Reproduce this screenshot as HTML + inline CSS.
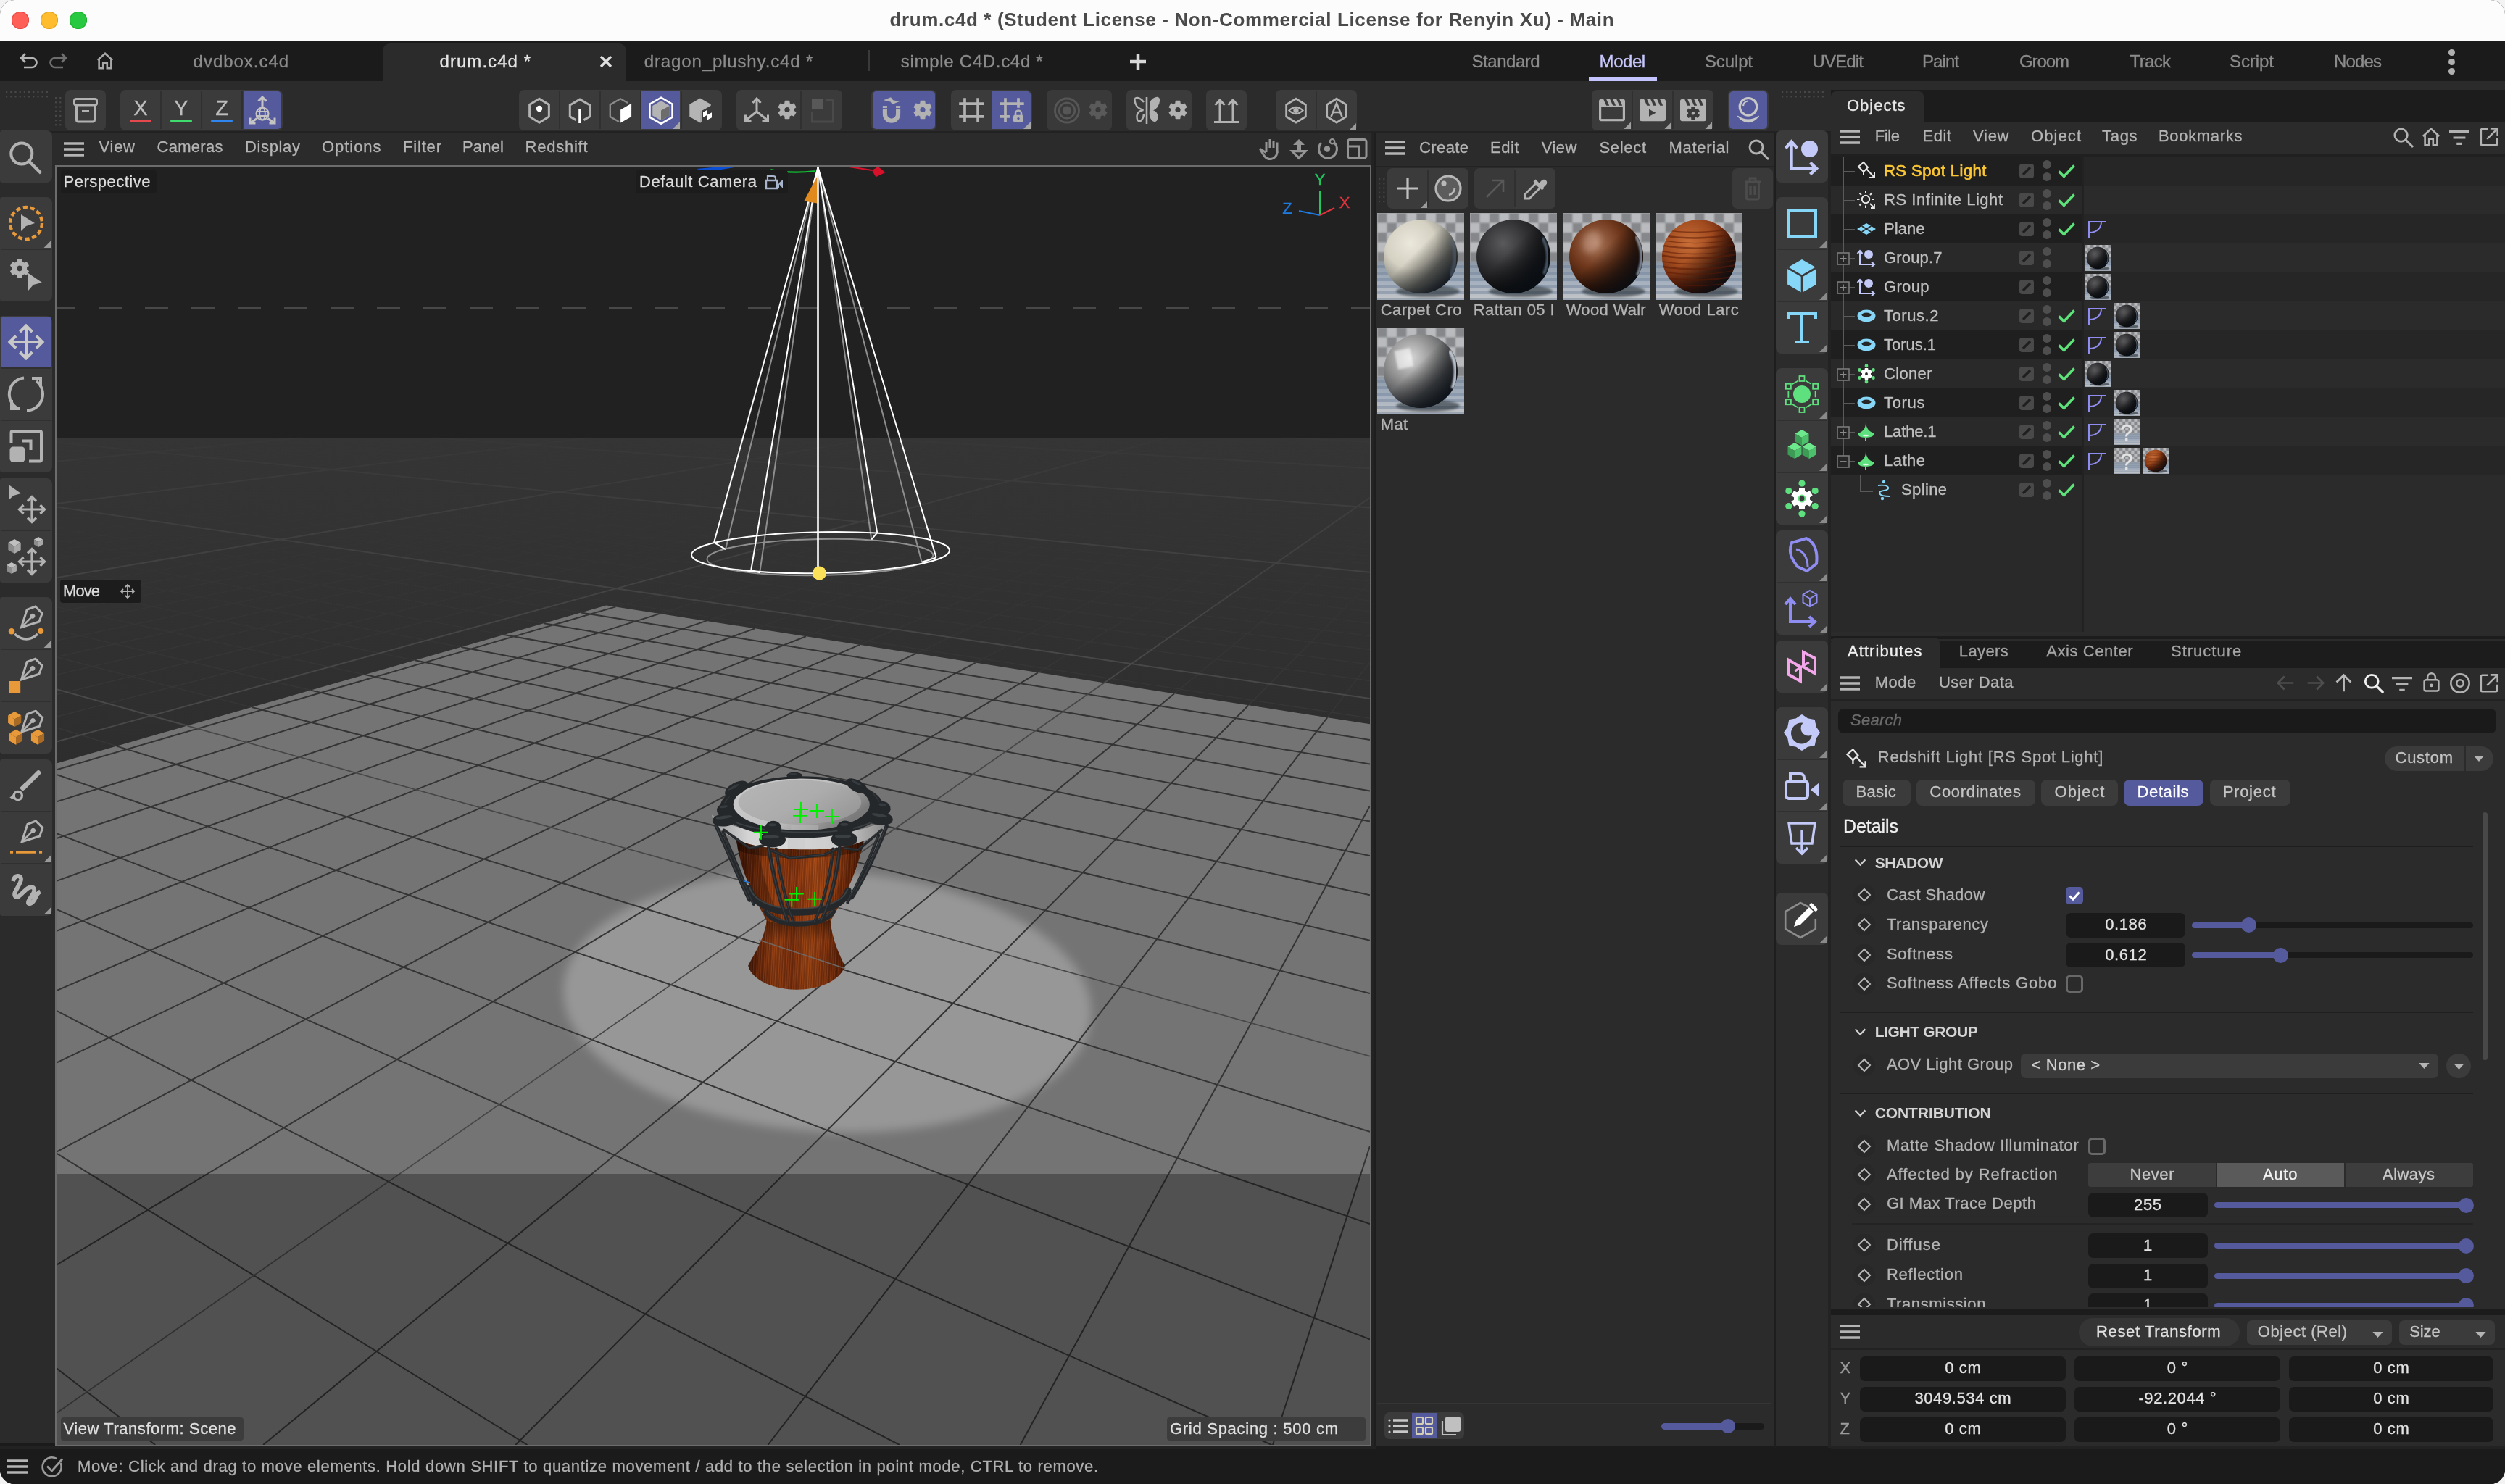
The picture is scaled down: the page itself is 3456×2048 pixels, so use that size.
<!DOCTYPE html><html><head><meta charset="utf-8"><title>drum.c4d</title><style>
html,body{margin:0;padding:0;background:#f3f3f3;}
body{width:3456px;height:2048px;position:relative;overflow:hidden;font-family:"Liberation Sans",sans-serif;}
.a{position:absolute;box-sizing:border-box;}
.t{white-space:nowrap;will-change:opacity;-webkit-text-stroke:0.3px currentColor;}
svg{overflow:visible;display:block;}
#root{position:absolute;left:0;top:0;width:3456px;height:2048px;}
</style></head><body><div id="root">
<div class="a " style="left:0px;top:0px;width:3456px;height:2048px;background:#1b1b1b;border-radius:20px;"></div>
<div class="a " style="left:0px;top:0px;width:3456px;height:56px;background:#fcfcfc;border-radius:20px 20px 0 0;"></div>
<div class="a " style="left:0px;top:55.5px;width:3456px;height:1.5px;background:#050505;"></div>
<div class="a " style="left:16px;top:16px;width:24px;height:24px;background:#fe5f57;border-radius:12px;box-shadow:inset 0 0 0 1px #e14640;"></div>
<div class="a " style="left:56px;top:16px;width:24px;height:24px;background:#febc2e;border-radius:12px;box-shadow:inset 0 0 0 1px #dfa123;"></div>
<div class="a " style="left:96px;top:16px;width:24px;height:24px;background:#28c840;border-radius:12px;box-shadow:inset 0 0 0 1px #1dad2b;"></div>
<div class="a t" style="left:1227.50px;top:9.10px;font-size:26px;line-height:36.40px;color:#4a4a4a;letter-spacing:0.624px;font-weight:700;-webkit-text-stroke:0;">drum.c4d * (Student License - Non-Commercial License for Renyin Xu) - Main</div>
<div class="a " style="left:0px;top:56px;width:3456px;height:56px;background:#1b1b1b;"></div>
<div class="a " style="left:528px;top:60px;width:336px;height:52px;background:#2b2b2b;border-radius:10px 10px 0 0;"></div>
<svg class="a" style="left:27px;top:71px;" width="26" height="26" viewBox="0 0 26 26"><path d="M8 3 L2 9 L8 15 M2 9 H17 a6.5 6.5 0 0 1 0 13 H6" fill="none" stroke="#b4b4b4" stroke-width="2.6" stroke-linecap="butt" stroke-linejoin="miter" /></svg>
<svg class="a" style="left:67px;top:71px;" width="26" height="26" viewBox="0 0 26 26"><path d="M18 3 L24 9 L18 15 M24 9 H9 a6.5 6.5 0 0 0 0 13 H20" fill="none" stroke="#6e6e6e" stroke-width="2.6" stroke-linecap="butt" stroke-linejoin="miter" /></svg>
<svg class="a" style="left:132px;top:71px;" width="26" height="26" viewBox="0 0 28 28"><path d="M3 13 L14 3 L25 13 M5 11.5 V25 H11 V17 H17 V25 H23 V11.5" fill="none" stroke="#a8a8a8" stroke-width="2.8" stroke-linecap="butt" stroke-linejoin="miter" /></svg>
<div class="a t" style="left:266.60px;top:68.48px;font-size:24px;line-height:33.60px;color:#8c8c8c;letter-spacing:0.973px;">dvdbox.c4d</div>
<div class="a t" style="left:606.50px;top:68.48px;font-size:24px;line-height:33.60px;color:#e6e6e6;letter-spacing:1.051px;">drum.c4d *</div>
<svg class="a" style="left:826px;top:75px;" width="20" height="20" viewBox="0 0 20 20"><path d="M3 3 L17 17 M17 3 L3 17" fill="none" stroke="#e0e0e0" stroke-width="3.2" stroke-linecap="butt" stroke-linejoin="miter" /></svg>
<div class="a t" style="left:888.80px;top:68.48px;font-size:24px;line-height:33.60px;color:#8c8c8c;letter-spacing:0.860px;">dragon_plushy.c4d *</div>
<div class="a " style="left:1198px;top:69px;width:2px;height:29px;background:#3a3a3a;"></div>
<div class="a t" style="left:1242.70px;top:68.48px;font-size:24px;line-height:33.60px;color:#8c8c8c;letter-spacing:0.707px;">simple C4D.c4d *</div>
<svg class="a" style="left:1558px;top:73px;" width="24" height="24" viewBox="0 0 24 24"><path d="M12 1 V23 M1 12 H23" fill="none" stroke="#d8d8d8" stroke-width="4.5" stroke-linecap="butt" stroke-linejoin="miter" /></svg>
<div class="a t" style="left:2030.50px;top:68.48px;font-size:24px;line-height:33.60px;color:#8c8c8c;letter-spacing:-0.457px;">Standard</div>
<div class="a t" style="left:2206.60px;top:68.48px;font-size:24px;line-height:33.60px;color:#c8c8ff;letter-spacing:-0.441px;">Model</div>
<div class="a t" style="left:2352.00px;top:68.48px;font-size:24px;line-height:33.60px;color:#8c8c8c;letter-spacing:-0.140px;">Sculpt</div>
<div class="a t" style="left:2500.50px;top:68.48px;font-size:24px;line-height:33.60px;color:#8c8c8c;letter-spacing:-0.839px;">UVEdit</div>
<div class="a t" style="left:2652.00px;top:68.48px;font-size:24px;line-height:33.60px;color:#8c8c8c;letter-spacing:-0.925px;">Paint</div>
<div class="a t" style="left:2786.00px;top:68.48px;font-size:24px;line-height:33.60px;color:#8c8c8c;letter-spacing:-1.086px;">Groom</div>
<div class="a t" style="left:2938.60px;top:68.48px;font-size:24px;line-height:33.60px;color:#8c8c8c;letter-spacing:-0.677px;">Track</div>
<div class="a t" style="left:3076.00px;top:68.48px;font-size:24px;line-height:33.60px;color:#8c8c8c;letter-spacing:-0.069px;">Script</div>
<div class="a t" style="left:3220.00px;top:68.48px;font-size:24px;line-height:33.60px;color:#8c8c8c;letter-spacing:-0.843px;">Nodes</div>
<div class="a " style="left:2192px;top:106px;width:94px;height:6px;background:#c3c3ff;"></div>
<div class="a " style="left:3377.5px;top:67.5px;width:9px;height:9px;background:#b0b0b0;border-radius:5px;"></div>
<div class="a " style="left:3377.5px;top:80.5px;width:9px;height:9px;background:#b0b0b0;border-radius:5px;"></div>
<div class="a " style="left:3377.5px;top:93.5px;width:9px;height:9px;background:#b0b0b0;border-radius:5px;"></div>
<div class="a " style="left:0px;top:112px;width:3456px;height:1880px;background:#2b2b2b;"></div>
<div class="a " style="left:0px;top:181px;width:3456px;height:2px;background:#222222;"></div>
<svg class="a" style="left:8px;top:126px;" width="62" height="12.4" viewBox="0 0 62 12.4"><rect x="0.0" y="0.0" width="2.2" height="2.2" fill="#484848"/><rect x="0.0" y="6.2" width="2.2" height="2.2" fill="#484848"/><rect x="6.2" y="0.0" width="2.2" height="2.2" fill="#484848"/><rect x="6.2" y="6.2" width="2.2" height="2.2" fill="#484848"/><rect x="12.4" y="0.0" width="2.2" height="2.2" fill="#484848"/><rect x="12.4" y="6.2" width="2.2" height="2.2" fill="#484848"/><rect x="18.6" y="0.0" width="2.2" height="2.2" fill="#484848"/><rect x="18.6" y="6.2" width="2.2" height="2.2" fill="#484848"/><rect x="24.8" y="0.0" width="2.2" height="2.2" fill="#484848"/><rect x="24.8" y="6.2" width="2.2" height="2.2" fill="#484848"/><rect x="31.0" y="0.0" width="2.2" height="2.2" fill="#484848"/><rect x="31.0" y="6.2" width="2.2" height="2.2" fill="#484848"/><rect x="37.2" y="0.0" width="2.2" height="2.2" fill="#484848"/><rect x="37.2" y="6.2" width="2.2" height="2.2" fill="#484848"/><rect x="43.4" y="0.0" width="2.2" height="2.2" fill="#484848"/><rect x="43.4" y="6.2" width="2.2" height="2.2" fill="#484848"/><rect x="49.6" y="0.0" width="2.2" height="2.2" fill="#484848"/><rect x="49.6" y="6.2" width="2.2" height="2.2" fill="#484848"/><rect x="55.800000000000004" y="0.0" width="2.2" height="2.2" fill="#484848"/><rect x="55.800000000000004" y="6.2" width="2.2" height="2.2" fill="#484848"/></svg>
<svg class="a" style="left:76px;top:134px;" width="12.4" height="43.4" viewBox="0 0 12.4 43.4"><rect x="0.0" y="0.0" width="2.2" height="2.2" fill="#484848"/><rect x="0.0" y="6.2" width="2.2" height="2.2" fill="#484848"/><rect x="0.0" y="12.4" width="2.2" height="2.2" fill="#484848"/><rect x="0.0" y="18.6" width="2.2" height="2.2" fill="#484848"/><rect x="0.0" y="24.8" width="2.2" height="2.2" fill="#484848"/><rect x="0.0" y="31.0" width="2.2" height="2.2" fill="#484848"/><rect x="0.0" y="37.2" width="2.2" height="2.2" fill="#484848"/><rect x="6.2" y="0.0" width="2.2" height="2.2" fill="#484848"/><rect x="6.2" y="6.2" width="2.2" height="2.2" fill="#484848"/><rect x="6.2" y="12.4" width="2.2" height="2.2" fill="#484848"/><rect x="6.2" y="18.6" width="2.2" height="2.2" fill="#484848"/><rect x="6.2" y="24.8" width="2.2" height="2.2" fill="#484848"/><rect x="6.2" y="31.0" width="2.2" height="2.2" fill="#484848"/><rect x="6.2" y="37.2" width="2.2" height="2.2" fill="#484848"/></svg>
<div class="a " style="left:90px;top:124px;width:56px;height:56px;background:#3b3b3b;border-radius:7px;"></div>
<svg class="a" style="left:90px;top:124px;" width="56" height="56" viewBox="0 0 56 56"><rect x="12.5" y="12.5" width="31" height="8.5" rx="2.5" fill="none" stroke="#b2b2b2" stroke-width="3" stroke-linecap="butt" stroke-linejoin="miter" /><path d="M15.5 21 V41.5 a2.5 2.5 0 0 0 2.5 2.5 H38 a2.5 2.5 0 0 0 2.5 -2.5 V21" fill="none" stroke="#b2b2b2" stroke-width="3" stroke-linecap="butt" stroke-linejoin="miter" /><path d="M23 29.5 H33" fill="none" stroke="#b2b2b2" stroke-width="3" stroke-linecap="butt" stroke-linejoin="miter" /></svg>
<div class="a " style="left:166px;top:124px;width:224px;height:56px;background:#3b3b3b;border-radius:7px;"></div>
<div class="a t" style="left:184.33px;top:128.53px;font-size:29px;line-height:40.60px;color:#bdbdbd;letter-spacing:0.000px;">X</div>
<div class="a " style="left:179px;top:165px;width:30px;height:4px;background:#e5484d;border-radius:2px;"></div>
<div class="a " style="left:221px;top:126px;width:2px;height:52px;background:#303030;"></div>
<div class="a t" style="left:240.33px;top:128.53px;font-size:29px;line-height:40.60px;color:#bdbdbd;letter-spacing:0.000px;">Y</div>
<div class="a " style="left:235px;top:165px;width:30px;height:4px;background:#3ddc6c;border-radius:2px;"></div>
<div class="a " style="left:277px;top:126px;width:2px;height:52px;background:#303030;"></div>
<div class="a t" style="left:297.14px;top:128.53px;font-size:29px;line-height:40.60px;color:#bdbdbd;letter-spacing:0.000px;">Z</div>
<div class="a " style="left:291px;top:165px;width:30px;height:4px;background:#2f86f0;border-radius:2px;"></div>
<div class="a " style="left:333px;top:126px;width:2px;height:52px;background:#303030;"></div>
<div class="a " style="left:336px;top:126px;width:52px;height:52px;background:#555a9c;border-radius:0 5px 5px 0;"></div>
<svg class="a" style="left:334px;top:124px;" width="56" height="56" viewBox="0 0 56 56"><circle cx="28" cy="33" r="8.5" fill="none" stroke="#c4c4c4" stroke-width="2.2" stroke-linecap="butt" stroke-linejoin="miter" /><ellipse cx="28" cy="33" rx="3.8" ry="8.5" fill="none" stroke="#c4c4c4" stroke-width="1.8" stroke-linecap="butt" stroke-linejoin="miter" /><path d="M19.5 30 H36.5 M19.5 36 H36.5" fill="none" stroke="#c4c4c4" stroke-width="1.8" stroke-linecap="butt" stroke-linejoin="miter" /><path d="M28 24 V10 M22.5 15.5 L28 10 L33.5 15.5" fill="none" stroke="#c4c4c4" stroke-width="3" stroke-linecap="butt" stroke-linejoin="miter" /><path d="M20.5 39.5 L11 46 M11 38.5 V46 H18.5" fill="none" stroke="#c4c4c4" stroke-width="3" stroke-linecap="butt" stroke-linejoin="miter" /><path d="M35.5 39.5 L45 46 M45 38.5 V46 H37.5" fill="none" stroke="#c4c4c4" stroke-width="3" stroke-linecap="butt" stroke-linejoin="miter" /></svg>
<div class="a " style="left:716px;top:124px;width:280px;height:56px;background:#3b3b3b;border-radius:7px;"></div>
<svg class="a" style="left:716px;top:124px;" width="56" height="56" viewBox="0 0 56 56"><polygon points="28.00,12.20 41.34,20.45 41.34,36.95 28.00,45.20 14.66,36.95 14.66,20.45" fill="none" stroke="#b2b2b2" stroke-width="3" stroke-linecap="butt" stroke-linejoin="miter" /><circle cx="28" cy="26" r="4.2" fill="#fff"/></svg>
<div class="a " style="left:771px;top:126px;width:2px;height:52px;background:#303030;"></div>
<svg class="a" style="left:772px;top:124px;" width="56" height="56" viewBox="0 0 56 56"><path d="M22.5 41.6 L14.3 36.8 V21 L28 13.1 L41.7 21 V36.8 L33.5 41.6" fill="none" stroke="#b2b2b2" stroke-width="3" stroke-linecap="butt" stroke-linejoin="miter" /><path d="M28 27 V46" fill="none" stroke="#fff" stroke-width="3.6" stroke-linecap="butt" stroke-linejoin="miter" /></svg>
<div class="a " style="left:827px;top:126px;width:2px;height:52px;background:#303030;"></div>
<svg class="a" style="left:828px;top:124px;" width="56" height="56" viewBox="0 0 56 56"><path d="M26 44 L13.8 37 V20.5 L28 12.3 L38 18" fill="none" stroke="#8a8a8a" stroke-width="2.4" stroke-linecap="butt" stroke-linejoin="miter" /><polygon points="28.1,27.4 43.1,18.8 43.1,37 28.1,45.6" fill="#fff"/></svg>
<div class="a " style="left:883px;top:126px;width:2px;height:52px;background:#303030;"></div>
<div class="a " style="left:884px;top:126px;width:54px;height:52px;background:#555a9c;border-radius:0;"></div>
<svg class="a" style="left:884px;top:124px;" width="56" height="56" viewBox="0 0 56 56"><polygon points="28.00,15.10 39.78,21.90 39.78,35.50 28.00,42.30 16.22,35.50 16.22,21.90" fill="#b4b4b4"/><polygon points="28,28.5 39.78,21.90 39.78,35.50 28.00,42.30" fill="#6c6c6c"/><polygon points="28.00,10.70 43.59,19.70 43.59,37.70 28.00,46.70 12.41,37.70 12.41,19.70" fill="none" stroke="#fff" stroke-width="2.6" stroke-linecap="butt" stroke-linejoin="miter" /><polygon points="54,44 54,54 44,54" fill="#a8a8a8"/></svg>
<div class="a " style="left:939px;top:126px;width:2px;height:52px;background:#303030;"></div>
<svg class="a" style="left:940px;top:124px;" width="56" height="56" viewBox="0 0 56 56"><polygon points="26.00,11.50 40.72,20.00 40.72,37.00 26.00,45.50 11.28,37.00 11.28,20.00" fill="#b4b4b4"/><polygon points="26,28.5 40.72,37.00 26.00,45.50" fill="#a4a4a4"/><polygon points="28,29 44,20 44,40 28,49" fill="#3b3b3b"/><polygon points="30,31 36,27.6 36,34.6 30,38" fill="#fff"/><polygon points="36,34.6 42,31.2 42,38.2 36,41.6" fill="#fff"/></svg>
<div class="a " style="left:1016px;top:124px;width:146px;height:56px;background:#3b3b3b;border-radius:7px;"></div>
<svg class="a" style="left:1016px;top:124px;" width="56" height="56" viewBox="0 0 56 56"><path d="M28 30 V12 M22.5 18 L28 12 L33.5 18 M28 30 L13 42 M12.5 34.5 V42.5 H20.5 M28 30 L43 42 M43.5 34.5 V42.5 H35.5" fill="none" stroke="#b2b2b2" stroke-width="3" stroke-linecap="butt" stroke-linejoin="miter" /></svg>
<svg class="a" style="left:1064px;top:124px;" width="44" height="56" viewBox="0 0 44 56"><path d="M19.04 18.79 L19.29 15.50 L24.71 15.50 L24.96 18.79 L28.07 20.58 L31.03 19.15 L33.75 23.85 L31.02 25.71 L31.02 29.29 L33.75 31.15 L31.03 35.85 L28.07 34.42 L24.96 36.21 L24.71 39.50 L19.29 39.50 L19.04 36.21 L15.93 34.42 L12.97 35.85 L10.25 31.15 L12.98 29.29 L12.98 25.71 L10.25 23.85 L12.97 19.15 L15.93 20.58 Z M17.70 27.50 a4.3 4.3 0 1 0 8.6 0 a4.3 4.3 0 1 0 -8.6 0 Z" fill="#b2b2b2" fill-rule="evenodd" stroke="#b2b2b2" stroke-width="1.4" stroke-linejoin="round"/></svg>
<div class="a " style="left:1104px;top:126px;width:2px;height:52px;background:#303030;"></div>
<svg class="a" style="left:1106px;top:124px;" width="56" height="56" viewBox="0 0 56 56"><rect x="14" y="12" width="15" height="15" fill="#585858"/><path d="M33 13.5 H43.5 V44 H14.5 V31" fill="none" stroke="#4a4a4a" stroke-width="3" stroke-linecap="butt" stroke-linejoin="miter" /></svg>
<div class="a " style="left:1202px;top:124px;width:90px;height:56px;background:#3b3b3b;border-radius:7px;"></div>
<div class="a " style="left:1204px;top:126px;width:86px;height:52px;background:#555a9c;border-radius:5px;"></div>
<svg class="a" style="left:1206px;top:124px;" width="46" height="56" viewBox="0 0 46 56"><path d="M14.9 26.6 V33.6 a9.1 9.1 0 0 0 18.2 0 V26.6" fill="none" stroke="#b2b2b2" stroke-width="6.1"/><rect x="11.85" y="22.1" width="6.1" height="3" fill="#b2b2b2"/><rect x="30.05" y="22.1" width="6.1" height="3" fill="#b2b2b2"/><polygon points="13,14.3 23,10.3 26.2,14.2 35,16 25,20 22.6,16.600" fill="#b2b2b2"/></svg>
<svg class="a" style="left:1251px;top:124px;" width="44" height="56" viewBox="0 0 44 56"><path d="M19.04 18.79 L19.29 15.50 L24.71 15.50 L24.96 18.79 L28.07 20.58 L31.03 19.15 L33.75 23.85 L31.02 25.71 L31.02 29.29 L33.75 31.15 L31.03 35.85 L28.07 34.42 L24.96 36.21 L24.71 39.50 L19.29 39.50 L19.04 36.21 L15.93 34.42 L12.97 35.85 L10.25 31.15 L12.98 29.29 L12.98 25.71 L10.25 23.85 L12.97 19.15 L15.93 20.58 Z M17.70 27.50 a4.3 4.3 0 1 0 8.6 0 a4.3 4.3 0 1 0 -8.6 0 Z" fill="#b2b2b2" fill-rule="evenodd" stroke="#b2b2b2" stroke-width="1.4" stroke-linejoin="round"/></svg>
<div class="a " style="left:1312px;top:124px;width:112px;height:56px;background:#3b3b3b;border-radius:7px;"></div>
<div class="a " style="left:1368px;top:126px;width:54px;height:52px;background:#555a9c;border-radius:0 5px 5px 0;"></div>
<svg class="a" style="left:1312px;top:124px;" width="56" height="56" viewBox="0 0 56 56"><path d="M19 11.2 V44.6 M37.1 11.2 V44.6 M11.2 19.1 H45 M11.2 36.8 H45" fill="none" stroke="#b2b2b2" stroke-width="3.7" stroke-linecap="butt" stroke-linejoin="miter" /></svg>
<svg class="a" style="left:1368px;top:124px;" width="56" height="56" viewBox="0 0 56 56"><path d="M19 11.2 V44.6 M37 11.2 V24.7 M11.2 19.1 H44.7 M11.2 36.8 H24.9" fill="none" stroke="#b2b2b2" stroke-width="3.7" stroke-linecap="butt" stroke-linejoin="miter" /><rect x="30" y="34.7" width="14" height="9.800" rx="2" fill="#b2b2b2"/><path d="M33 35 V32.500 a4 4 0 0 1 8 0 V35" fill="none" stroke="#b2b2b2" stroke-width="2.6" stroke-linecap="butt" stroke-linejoin="miter" /><circle cx="37" cy="39.600" r="1.7" fill="#555a9c"/><polygon points="54,44 54,54 44,54" fill="#a8a8a8"/></svg>
<div class="a " style="left:1444px;top:124px;width:90px;height:56px;background:#393939;border-radius:7px;"></div>
<svg class="a" style="left:1444px;top:124px;" width="46" height="56" viewBox="0 0 46 56"><circle cx="28" cy="28.500" r="16.500" fill="none" stroke="#565656" stroke-width="2.8" stroke-linecap="butt" stroke-linejoin="miter" /><circle cx="28" cy="28.500" r="10.800" fill="none" stroke="#565656" stroke-width="2.6" stroke-linecap="butt" stroke-linejoin="miter" /><circle cx="28" cy="28.500" r="6" fill="#565656"/></svg>
<svg class="a" style="left:1493px;top:124px;" width="44" height="56" viewBox="0 0 44 56"><path d="M19.04 18.79 L19.29 15.50 L24.71 15.50 L24.96 18.79 L28.07 20.58 L31.03 19.15 L33.75 23.85 L31.02 25.71 L31.02 29.29 L33.75 31.15 L31.03 35.85 L28.07 34.42 L24.96 36.21 L24.71 39.50 L19.29 39.50 L19.04 36.21 L15.93 34.42 L12.97 35.85 L10.25 31.15 L12.98 29.29 L12.98 25.71 L10.25 23.85 L12.97 19.15 L15.93 20.58 Z M17.70 27.50 a4.3 4.3 0 1 0 8.6 0 a4.3 4.3 0 1 0 -8.6 0 Z" fill="#5a5a5a" fill-rule="evenodd" stroke="#5a5a5a" stroke-width="1.4" stroke-linejoin="round"/></svg>
<div class="a " style="left:1554px;top:124px;width:90px;height:56px;background:#3b3b3b;border-radius:7px;"></div>
<svg class="a" style="left:1554px;top:124px;" width="46" height="56" viewBox="0 0 46 56"><path d="M28 10 V47" fill="none" stroke="#b2b2b2" stroke-width="2.6" stroke-linecap="butt" stroke-linejoin="miter" /><path d="M24 17 C18 9 11 10 11.5 14 C12 20 14 25 23.5 28 C15 29 13 36 15.5 42 C19 46 24 40 24 33" fill="none" stroke="#b2b2b2" stroke-width="2.4" stroke-linecap="butt" stroke-linejoin="miter" /><path d="M33 17 C38 9 46 9 45.5 14 C45 21 42 26 35 28.5 C43 30 44 37 41.5 42 C38 46 32.5 40 32.5 33 Z" fill="#b2b2b2" stroke="#b2b2b2" stroke-width="1.5"/></svg>
<svg class="a" style="left:1603px;top:124px;" width="44" height="56" viewBox="0 0 44 56"><path d="M19.04 18.79 L19.29 15.50 L24.71 15.50 L24.96 18.79 L28.07 20.58 L31.03 19.15 L33.75 23.85 L31.02 25.71 L31.02 29.29 L33.75 31.15 L31.03 35.85 L28.07 34.42 L24.96 36.21 L24.71 39.50 L19.29 39.50 L19.04 36.21 L15.93 34.42 L12.97 35.85 L10.25 31.15 L12.98 29.29 L12.98 25.71 L10.25 23.85 L12.97 19.15 L15.93 20.58 Z M17.70 27.50 a4.3 4.3 0 1 0 8.6 0 a4.3 4.3 0 1 0 -8.6 0 Z" fill="#b2b2b2" fill-rule="evenodd" stroke="#b2b2b2" stroke-width="1.4" stroke-linejoin="round"/></svg>
<div class="a " style="left:1664px;top:124px;width:56px;height:56px;background:#3b3b3b;border-radius:7px;"></div>
<svg class="a" style="left:1664px;top:124px;" width="56" height="56" viewBox="0 0 56 56"><path d="M11 44.5 H45 M19 44 V14 M12.5 21 L19 14 L25.5 21 M37 44 V14 M30.5 21 L37 14 L43.5 21" fill="none" stroke="#b2b2b2" stroke-width="3" stroke-linecap="butt" stroke-linejoin="miter" /></svg>
<div class="a " style="left:1760px;top:124px;width:112px;height:56px;background:#3b3b3b;border-radius:7px;"></div>
<svg class="a" style="left:1760px;top:124px;" width="56" height="56" viewBox="0 0 56 56"><polygon points="28.00,12.20 41.34,20.45 41.34,36.95 28.00,45.20 14.66,36.95 14.66,20.45" fill="none" stroke="#b2b2b2" stroke-width="2.8" stroke-linecap="butt" stroke-linejoin="miter" /><path d="M18.5 28.5 Q28 19.5 37.5 28.5 Q28 37.5 18.5 28.5 Z" fill="none" stroke="#b2b2b2" stroke-width="2.2" stroke-linecap="butt" stroke-linejoin="miter" /><circle cx="28" cy="28.5" r="3.6" fill="#b2b2b2"/></svg>
<div class="a " style="left:1815px;top:126px;width:2px;height:52px;background:#303030;"></div>
<svg class="a" style="left:1816px;top:124px;" width="56" height="56" viewBox="0 0 56 56"><polygon points="28.00,12.20 41.34,20.45 41.34,36.95 28.00,45.20 14.66,36.95 14.66,20.45" fill="none" stroke="#b2b2b2" stroke-width="2.8" stroke-linecap="butt" stroke-linejoin="miter" /><path d="M20.5 37 L28 18.5 L35.5 37 M23.2 31 H32.8" fill="none" stroke="#b2b2b2" stroke-width="2.6" stroke-linecap="butt" stroke-linejoin="miter" /><polygon points="55,46 55,55 46,55" fill="#9a9a9a"/></svg>
<div class="a " style="left:2196px;top:124px;width:168px;height:56px;background:#3b3b3b;border-radius:7px;"></div>
<svg class="a" style="left:2196px;top:124px;" width="56" height="56" viewBox="0 0 56 56"><rect x="10" y="12.700" width="36" height="30.500" rx="3.200" fill="#b2b2b2"/><polygon points="16,12.500 20,12.500 24.2,21.700 20.2,21.700" fill="#3b3b3b"/><polygon points="25,12.500 29,12.500 33.2,21.700 29.2,21.700" fill="#3b3b3b"/><polygon points="34,12.500 38,12.500 42.2,21.700 38.2,21.700" fill="#3b3b3b"/><rect x="13.200" y="23.800" width="29.600" height="16.300" fill="#3b3b3b"/><polygon points="54,44.5 54,54 44.5,54" fill="#a0a0a0"/></svg>
<div class="a " style="left:2251px;top:126px;width:2px;height:52px;background:#303030;"></div>
<svg class="a" style="left:2252px;top:124px;" width="56" height="56" viewBox="0 0 56 56"><rect x="10" y="12.700" width="36" height="30.500" rx="3.200" fill="#b2b2b2"/><polygon points="16,12.500 20,12.500 24.2,21.700 20.2,21.700" fill="#3b3b3b"/><polygon points="25,12.500 29,12.500 33.2,21.700 29.2,21.700" fill="#3b3b3b"/><polygon points="34,12.500 38,12.500 42.2,21.700 38.2,21.700" fill="#3b3b3b"/><polygon points="23,26.700 23,36.700 32.500,31.700" fill="#3b3b3b"/><polygon points="54,44.5 54,54 44.5,54" fill="#a0a0a0"/></svg>
<div class="a " style="left:2307px;top:126px;width:2px;height:52px;background:#303030;"></div>
<svg class="a" style="left:2308px;top:124px;" width="56" height="56" viewBox="0 0 56 56"><rect x="10" y="12.700" width="36" height="30.500" rx="3.200" fill="#b2b2b2"/><polygon points="16,12.500 20,12.500 24.2,21.700 20.2,21.700" fill="#3b3b3b"/><polygon points="25,12.500 29,12.500 33.2,21.700 29.2,21.700" fill="#3b3b3b"/><polygon points="34,12.500 38,12.500 42.2,21.700 38.2,21.700" fill="#3b3b3b"/><path d="M25.91 26.43 L26.00 23.91 L29.80 23.91 L29.89 26.43 L31.99 27.64 L34.22 26.46 L36.11 29.75 L33.98 31.09 L33.98 33.51 L36.11 34.85 L34.22 38.14 L31.99 36.96 L29.89 38.17 L29.80 40.69 L26.00 40.69 L25.91 38.17 L23.81 36.96 L21.58 38.14 L19.69 34.85 L21.82 33.51 L21.82 31.09 L19.69 29.75 L21.58 26.46 L23.81 27.64 Z M25.00 32.30 a2.9 2.9 0 1 0 5.8 0 a2.9 2.9 0 1 0 -5.8 0 Z" fill="#3b3b3b" fill-rule="evenodd" stroke="#3b3b3b" stroke-width="1.4" stroke-linejoin="round"/><polygon points="54,44.5 54,54 44.5,54" fill="#a0a0a0"/></svg>
<div class="a " style="left:2384px;top:124px;width:56px;height:56px;background:#3b3b3b;border-radius:7px;"></div>
<div class="a " style="left:2386px;top:126px;width:52px;height:52px;background:#555a9c;border-radius:5px;"></div>
<svg class="a" style="left:2384px;top:124px;" width="56" height="56" viewBox="0 0 56 56"><circle cx="28" cy="23.300" r="11.800" fill="none" stroke="#c8c8c8" stroke-width="3.2" stroke-linecap="butt" stroke-linejoin="miter" /><path d="M21 22 a7.500 7.500 0 0 1 6 -6.500" fill="none" stroke="#c8c8c8" stroke-width="2.2" stroke-linecap="butt" stroke-linejoin="miter" /><path d="M13.800 36.500 Q28 52.500 42.200 36.500 Q28 46 13.800 36.500 Z" fill="#c8c8c8" stroke="#c8c8c8" stroke-width="1.500" stroke-linejoin="round"/></svg>
<svg class="a" style="left:2458px;top:126px;" width="62" height="12.4" viewBox="0 0 62 12.4"><rect x="0.0" y="0.0" width="2.2" height="2.2" fill="#484848"/><rect x="0.0" y="6.2" width="2.2" height="2.2" fill="#484848"/><rect x="6.2" y="0.0" width="2.2" height="2.2" fill="#484848"/><rect x="6.2" y="6.2" width="2.2" height="2.2" fill="#484848"/><rect x="12.4" y="0.0" width="2.2" height="2.2" fill="#484848"/><rect x="12.4" y="6.2" width="2.2" height="2.2" fill="#484848"/><rect x="18.6" y="0.0" width="2.2" height="2.2" fill="#484848"/><rect x="18.6" y="6.2" width="2.2" height="2.2" fill="#484848"/><rect x="24.8" y="0.0" width="2.2" height="2.2" fill="#484848"/><rect x="24.8" y="6.2" width="2.2" height="2.2" fill="#484848"/><rect x="31.0" y="0.0" width="2.2" height="2.2" fill="#484848"/><rect x="31.0" y="6.2" width="2.2" height="2.2" fill="#484848"/><rect x="37.2" y="0.0" width="2.2" height="2.2" fill="#484848"/><rect x="37.2" y="6.2" width="2.2" height="2.2" fill="#484848"/><rect x="43.4" y="0.0" width="2.2" height="2.2" fill="#484848"/><rect x="43.4" y="6.2" width="2.2" height="2.2" fill="#484848"/><rect x="49.6" y="0.0" width="2.2" height="2.2" fill="#484848"/><rect x="49.6" y="6.2" width="2.2" height="2.2" fill="#484848"/><rect x="55.800000000000004" y="0.0" width="2.2" height="2.2" fill="#484848"/><rect x="55.800000000000004" y="6.2" width="2.2" height="2.2" fill="#484848"/></svg>
<div class="a " style="left:0px;top:180px;width:72px;height:72px;background:#3b3b3b;border-radius:3px 8px 8px 3px;"></div>
<svg class="a" style="left:0px;top:180px;" width="72" height="72" viewBox="0 0 72 72"><circle cx="29.800" cy="32" r="14.500" fill="none" stroke="#b2b2b2" stroke-width="4" stroke-linecap="butt" stroke-linejoin="miter" /><path d="M40 42.500 L56.500 59" fill="none" stroke="#b2b2b2" stroke-width="4.4" stroke-linecap="butt" stroke-linejoin="miter" /></svg>
<div class="a " style="left:0px;top:272px;width:72px;height:144px;background:#3b3b3b;border-radius:3px 8px 8px 3px;"></div>
<svg class="a" style="left:0px;top:272px;" width="72" height="72" viewBox="0 0 72 72"><circle cx="36" cy="36" r="22" fill="none" stroke="#e8993a" stroke-width="4.400" stroke-dasharray="6.300 3.570"/><polygon points="29,24 29,47 36,40 48,36" fill="#b2b2b2"/><polygon points="70,60.5 70,70 60.5,70" fill="#9a9a9a"/></svg>
<div class="a " style="left:2px;top:343px;width:68px;height:2px;background:#303030;"></div>
<svg class="a" style="left:0px;top:344px;" width="72" height="72" viewBox="0 0 72 72"><path d="M23.91 17.41 L24.18 14.02 L29.82 14.02 L30.09 17.41 L33.33 19.28 L36.40 17.81 L39.22 22.70 L36.42 24.63 L36.42 28.37 L39.22 30.30 L36.40 35.19 L33.33 33.72 L30.09 35.59 L29.82 38.98 L24.18 38.98 L23.91 35.59 L20.67 33.72 L17.60 35.19 L14.78 30.30 L17.58 28.37 L17.58 24.63 L14.78 22.70 L17.60 17.81 L20.67 19.28 Z M22.40 26.50 a4.6 4.6 0 1 0 9.2 0 a4.6 4.6 0 1 0 -9.2 0 Z" fill="#b2b2b2" fill-rule="evenodd" stroke="#b2b2b2" stroke-width="1.4" stroke-linejoin="round"/><polygon points="39,33 39,57 46,49 58,46" fill="#b2b2b2"/></svg>
<div class="a " style="left:0px;top:436px;width:72px;height:216px;background:#3b3b3b;border-radius:3px 8px 8px 3px;"></div>
<div class="a " style="left:2px;top:437px;width:68px;height:70px;background:#555a9c;border-radius:2px 2px 0 0;"></div>
<svg class="a" style="left:0px;top:436px;" width="72" height="72" viewBox="0 0 72 72"><path d="M36 36 L36.0 13.5 M44.5 22.0 L36.0 13.5 L27.5 22.0 M36 36 L36.0 58.5 M27.5 50.0 L36.0 58.5 L44.5 50.0 M36 36 L13.5 36.0 M22.0 27.5 L13.5 36.0 L22.0 44.5 M36 36 L58.5 36.0 M50.0 44.5 L58.5 36.0 L50.0 27.5 " fill="none" stroke="#c8c8c8" stroke-width="4" stroke-linejoin="miter"/></svg>
<div class="a " style="left:2px;top:507px;width:68px;height:2px;background:#303030;"></div>
<svg class="a" style="left:0px;top:508px;" width="72" height="72" viewBox="0 0 72 72"><path d="M33 13.500 A22.500 22.500 0 0 0 22 54 M16 44 V56 H28" fill="none" stroke="#b2b2b2" stroke-width="4" stroke-linecap="butt" stroke-linejoin="miter" /><path d="M37 58.500 A22.500 22.500 0 0 0 50 18 M44 14 H56 V26" fill="none" stroke="#b2b2b2" stroke-width="4" stroke-linecap="butt" stroke-linejoin="miter" /></svg>
<div class="a " style="left:2px;top:579px;width:68px;height:2px;background:#303030;"></div>
<svg class="a" style="left:0px;top:580px;" width="72" height="72" viewBox="0 0 72 72"><path d="M15.500 31 V17 a2 2 0 0 1 2 -2 H55 a2 2 0 0 1 2 2 V54.500 a2 2 0 0 1 -2 2 H40" fill="none" stroke="#b2b2b2" stroke-width="4" stroke-linecap="butt" stroke-linejoin="miter" /><rect x="13.500" y="36.500" width="21" height="21" rx="4.500" fill="#b2b2b2"/><path d="M30 28.500 H42.500 V41" fill="none" stroke="#b2b2b2" stroke-width="4" stroke-linecap="butt" stroke-linejoin="miter" /></svg>
<div class="a " style="left:0px;top:660px;width:72px;height:144px;background:#3b3b3b;border-radius:3px 8px 8px 3px;"></div>
<svg class="a" style="left:0px;top:660px;" width="72" height="72" viewBox="0 0 72 72"><polygon points="12,9 12,30 18.5,24 29,21" fill="#b2b2b2"/><path d="M44 43 L44.0 25.5 M50.0 31.5 L44.0 25.5 L38.0 31.5 M44 43 L44.0 60.5 M38.0 54.5 L44.0 60.5 L50.0 54.5 M44 43 L26.5 43.0 M32.5 37.0 L26.5 43.0 L32.5 49.0 M44 43 L61.5 43.0 M55.5 49.0 L61.5 43.0 L55.5 37.0 " fill="none" stroke="#b2b2b2" stroke-width="3.2" stroke-linejoin="miter"/></svg>
<div class="a " style="left:2px;top:731px;width:68px;height:2px;background:#303030;"></div>
<svg class="a" style="left:0px;top:732px;" width="72" height="72" viewBox="0 0 72 72"><polygon points="20.00,12.00 28.66,17.00 20.00,22.00 11.34,17.00" fill="#c0c0c0"/><polygon points="20.00,22.00 28.66,17.00 28.66,27.00 20.00,32.00" fill="#a8a8a8"/><polygon points="20.00,22.00 20.00,32.00 11.34,27.00 11.34,17.00" fill="#8c8c8c"/><polygon points="53.00,9.00 59.06,12.50 53.00,16.00 46.94,12.50" fill="#c0c0c0"/><polygon points="53.00,16.00 59.06,12.50 59.06,19.50 53.00,23.00" fill="#a8a8a8"/><polygon points="53.00,16.00 53.00,23.00 46.94,19.50 46.94,12.50" fill="#8c8c8c"/><polygon points="16.00,44.00 22.93,48.00 16.00,52.00 9.07,48.00" fill="#c0c0c0"/><polygon points="16.00,52.00 22.93,48.00 22.93,56.00 16.00,60.00" fill="#a8a8a8"/><polygon points="16.00,52.00 16.00,60.00 9.07,56.00 9.07,48.00" fill="#8c8c8c"/><path d="M44 43 L44.0 25.5 M50.0 31.5 L44.0 25.5 L38.0 31.5 M44 43 L44.0 60.5 M38.0 54.5 L44.0 60.5 L50.0 54.5 M44 43 L26.5 43.0 M32.5 37.0 L26.5 43.0 L32.5 49.0 M44 43 L61.5 43.0 M55.5 49.0 L61.5 43.0 L55.5 37.0 " fill="none" stroke="#b2b2b2" stroke-width="3.2" stroke-linejoin="miter"/></svg>
<div class="a " style="left:0px;top:824px;width:72px;height:216px;background:#3b3b3b;border-radius:3px 8px 8px 3px;"></div>
<svg class="a" style="left:0px;top:824px;" width="72" height="72" viewBox="0 0 72 72"><g transform="translate(45,26.2) rotate(45) scale(1.0)"><path d="M-6.7 -12 H6.7 L11.8 -0.8 L0 21.9 L-11.8 -0.8 Z" fill="none" stroke="#b2b2b2" stroke-width="3.00" stroke-linejoin="miter"/><path d="M0 20 V0" stroke="#b2b2b2" stroke-width="2.60"/><circle cx="0" cy="0" r="3.3" fill="#b2b2b2"/></g><path d="M20.200 51 Q36.400 65 52 51" fill="none" stroke="#b2b2b2" stroke-width="3.6" stroke-linecap="butt" stroke-linejoin="miter" /><circle cx="16" cy="47.200" r="4.200" fill="#e8993a"/><circle cx="56.100" cy="46.900" r="4.200" fill="#e8993a"/><polygon points="70,60.5 70,70 60.5,70" fill="#9a9a9a"/></svg>
<div class="a " style="left:2px;top:895px;width:68px;height:2px;background:#303030;"></div>
<svg class="a" style="left:0px;top:896px;" width="72" height="72" viewBox="0 0 72 72"><g transform="translate(45,26.4) rotate(45) scale(1.0)"><path d="M-6.7 -12 H6.7 L11.8 -0.8 L0 21.9 L-11.8 -0.8 Z" fill="none" stroke="#b2b2b2" stroke-width="3.00" stroke-linejoin="miter"/><path d="M0 20 V0" stroke="#b2b2b2" stroke-width="2.60"/><circle cx="0" cy="0" r="3.3" fill="#b2b2b2"/></g><rect x="12" y="44" width="16.200" height="16.200" fill="#e8993a"/></svg>
<div class="a " style="left:2px;top:967px;width:68px;height:2px;background:#303030;"></div>
<svg class="a" style="left:0px;top:968px;" width="72" height="72" viewBox="0 0 72 72"><g transform="translate(45.4,26.4) rotate(45) scale(1.0)"><path d="M-6.7 -12 H6.7 L11.8 -0.8 L0 21.9 L-11.8 -0.8 Z" fill="none" stroke="#b2b2b2" stroke-width="3.00" stroke-linejoin="miter"/><path d="M0 20 V0" stroke="#b2b2b2" stroke-width="2.60"/><circle cx="0" cy="0" r="3.3" fill="#b2b2b2"/></g><polygon points="20.20,13.90 29.29,19.15 20.20,24.40 11.11,19.15" fill="#e8993a"/><polygon points="20.20,24.40 29.29,19.15 29.29,29.65 20.20,34.90" fill="#a86a24"/><polygon points="20.20,24.40 20.20,34.90 11.11,29.65 11.11,19.15" fill="#e8993a"/><polygon points="22.00,38.70 31.09,43.95 22.00,49.20 12.91,43.95" fill="#e8993a"/><polygon points="22.00,49.20 31.09,43.95 31.09,54.45 22.00,59.70" fill="#a86a24"/><polygon points="22.00,49.20 22.00,59.70 12.91,54.45 12.91,43.95" fill="#e8993a"/><polygon points="52.00,38.70 61.09,43.95 52.00,49.20 42.91,43.95" fill="#e8993a"/><polygon points="52.00,49.20 61.09,43.95 61.09,54.45 52.00,59.70" fill="#a86a24"/><polygon points="52.00,49.20 52.00,59.70 42.91,54.45 42.91,43.95" fill="#e8993a"/></svg>
<div class="a " style="left:0px;top:1048px;width:72px;height:216px;background:#3b3b3b;border-radius:3px 8px 8px 3px;"></div>
<svg class="a" style="left:0px;top:1048px;" width="72" height="72" viewBox="0 0 72 72"><path d="M33 38.500 L53 18.500" stroke="#b2b2b2" stroke-width="6.600" stroke-linecap="round"/><path d="M31.500 42 L29 39.500 L34 34.500 L36.500 37 Z" fill="#b2b2b2" stroke="#b2b2b2" stroke-width="3"/><circle cx="24.800" cy="50" r="5.600" fill="none" stroke="#b2b2b2" stroke-width="3.4" stroke-linecap="butt" stroke-linejoin="miter" /><path d="M20 53.500 Q17 54.500 14.700 52.500 Q17.500 51.500 18.500 48.500" fill="#b2b2b2" stroke="#b2b2b2" stroke-width="1.500"/></svg>
<div class="a " style="left:2px;top:1119px;width:68px;height:2px;background:#303030;"></div>
<svg class="a" style="left:0px;top:1120px;" width="72" height="72" viewBox="0 0 72 72"><g transform="translate(45.7,26.2) rotate(45) scale(1.0)"><path d="M-6.7 -12 H6.7 L11.8 -0.8 L0 21.9 L-11.8 -0.8 Z" fill="none" stroke="#b2b2b2" stroke-width="3.00" stroke-linejoin="miter"/><path d="M0 20 V0" stroke="#b2b2b2" stroke-width="2.60"/><circle cx="0" cy="0" r="3.3" fill="#b2b2b2"/></g><path d="M14 56 H18.100 M22 56 H49.900 M54 56 H58.100" stroke="#e8993a" stroke-width="3.700"/><polygon points="70,60.5 70,70 60.5,70" fill="#9a9a9a"/></svg>
<div class="a " style="left:2px;top:1191px;width:68px;height:2px;background:#303030;"></div>
<svg class="a" style="left:0px;top:1192px;" width="72" height="72" viewBox="0 0 72 72"><path d="M18 24 C20 15 29.500 15 29 22 C28 30 17 40 21 45 C25 50 33 36 40 33 C47 30 50 36 44 44 C38 52 37 57 43 54.500 C49 52 49 41 55.500 38.500" fill="none" stroke="#b2b2b2" stroke-width="5.900" stroke-linecap="butt"/><polygon points="70,60.5 70,70 60.5,70" fill="#9a9a9a"/></svg>
<div class="a " style="left:76px;top:183px;width:1816px;height:45px;background:#2b2b2b;"></div>
<svg class="a" style="left:88px;top:195px;" width="28" height="22" viewBox="0 0 28 22"><path d="M0 3 H28 M0 11 H28 M0 19 H28" fill="none" stroke="#b4b4b4" stroke-width="3.6" stroke-linecap="butt" stroke-linejoin="miter" /></svg>
<div class="a t" style="left:136.50px;top:187.85px;font-size:22px;line-height:30.80px;color:#b4b4b4;letter-spacing:0.738px;">View</div>
<div class="a t" style="left:216.50px;top:187.85px;font-size:22px;line-height:30.80px;color:#b4b4b4;letter-spacing:0.293px;">Cameras</div>
<div class="a t" style="left:338.00px;top:187.85px;font-size:22px;line-height:30.80px;color:#b4b4b4;letter-spacing:0.645px;">Display</div>
<div class="a t" style="left:444.00px;top:187.85px;font-size:22px;line-height:30.80px;color:#b4b4b4;letter-spacing:0.948px;">Options</div>
<div class="a t" style="left:556.00px;top:187.85px;font-size:22px;line-height:30.80px;color:#b4b4b4;letter-spacing:0.823px;">Filter</div>
<div class="a t" style="left:638.00px;top:187.85px;font-size:22px;line-height:30.80px;color:#b4b4b4;letter-spacing:0.184px;">Panel</div>
<div class="a t" style="left:724.50px;top:187.85px;font-size:22px;line-height:30.80px;color:#b4b4b4;letter-spacing:0.757px;">Redshift</div>
<svg class="a" style="left:1737px;top:191px;" width="28" height="30" viewBox="0 0 28 30"><path d="M10 19 V5 M15 13 V1 M20 13 V4 M25 20 V5.500" stroke="#949494" stroke-width="3" fill="none"/><path d="M25 18 C25 24 21 28.500 15 28.500 C9 28.500 7 24 1.500 14.500 L9.500 19.500" stroke="#949494" stroke-width="3" fill="none" stroke-linejoin="miter"/></svg>
<svg class="a" style="left:1778px;top:191.5px;" width="28" height="30" viewBox="0 0 28 30"><polygon points="14,0 22,8 17,8 17,15 27,15 14,28.500 1,15 11,15 11,8 6,8" fill="#949494"/><polygon points="14,23.500 19.500,18.200 8.500,18.200" fill="#2b2b2b"/></svg>
<svg class="a" style="left:1817px;top:191px;" width="30" height="30" viewBox="0 0 30 30"><path d="M5.500 6.500 A12.500 12.500 0 1 0 24 6" stroke="#949494" stroke-width="3" fill="none"/><circle cx="21" cy="4.200" r="3.200" stroke="#949494" stroke-width="2.200" fill="none"/><circle cx="14" cy="14.500" r="4.200" fill="#949494"/></svg>
<svg class="a" style="left:1857.5px;top:191px;" width="30" height="30" viewBox="0 0 30 30"><rect x="1.500" y="1.500" width="25.500" height="25.500" rx="3" stroke="#949494" stroke-width="3" fill="none"/><path d="M2 11 H17.500 V27" stroke="#949494" stroke-width="3" fill="none"/></svg>
<div class="a " style="left:76px;top:228px;width:1816px;height:1768px;background:#6c6c6c;"></div>
<div class="a " style="left:1892px;top:183px;width:3px;height:1815px;background:#232323;"></div>
<div class="a " style="left:1895px;top:183px;width:3px;height:1815px;background:#1e1e1e;"></div>
<div class="a " style="left:0px;top:1996px;width:1898px;height:4px;background:#222;"></div>
<svg class="a" style="left:0px;top:0px;pointer-events:none;" width="3456" height="2048" viewBox="0 0 3456 2048"><g clip-path="url(#vpc)"><rect x="78" y="230" width="1812" height="1764" fill="#212121"/><defs><linearGradient id="flr" x1="0" y1="0" x2="0" y2="1"><stop offset="0" stop-color="#353535"/><stop offset="1" stop-color="#2d2d2d"/></linearGradient><filter id="blur8" x="-20%" y="-20%" width="140%" height="140%"><feGaussianBlur stdDeviation="7"/></filter><clipPath id="vpc"><rect x="78" y="230" width="1812" height="1764"/></clipPath></defs><rect x="78" y="604" width="1812" height="480" fill="url(#flr)"/><path d="M72 425 H1890" stroke="#484848" stroke-width="2" stroke-dasharray="32 32"/><defs><linearGradient id="mfade" x1="0" y1="604" x2="0" y2="1000" gradientUnits="userSpaceOnUse"><stop offset="0" stop-color="#fff" stop-opacity="0"/><stop offset="0.2" stop-color="#fff" stop-opacity="0.15"/><stop offset="1" stop-color="#fff" stop-opacity="1"/></linearGradient><mask id="mmask"><rect x="0" y="600" width="2000" height="600" fill="url(#mfade)"/></mask></defs><path d="M97.3 604.0L78.0 605.6M137.1 604.0L78.0 609.0M176.9 604.0L78.0 612.5M216.7 604.0L78.0 616.1M256.5 604.0L78.0 619.9M296.4 604.0L78.0 623.9M336.2 604.0L78.0 628.0M376.0 604.0L78.0 632.3M455.6 604.0L78.0 641.4M495.5 604.0L78.0 646.3M535.3 604.0L78.0 651.4M575.1 604.0L78.0 656.8M614.9 604.0L78.0 662.4M654.8 604.0L78.0 668.2M694.6 604.0L78.0 674.4M734.4 604.0L78.0 680.9M774.2 604.0L78.0 687.8M853.9 604.0L78.0 702.6M893.7 604.0L78.0 710.7M933.5 604.0L78.0 719.2M973.3 604.0L78.0 728.3M1013.1 604.0L78.0 738.0M1053.0 604.0L78.0 748.3M1092.8 604.0L78.0 759.2M1132.6 604.0L78.0 771.0M1172.4 604.0L78.0 783.6M1252.1 604.0L78.0 811.8M1291.9 604.0L78.0 827.7M1331.7 604.0L78.0 844.8M1371.5 604.0L78.0 863.5M1411.4 604.0L78.0 884.0M1451.2 604.0L78.0 906.5M1491.0 604.0L78.0 931.2M1530.8 604.0L78.0 958.7M1570.6 604.0L78.0 989.2M1650.3 604.0L78.0 1062.3M1690.1 604.0L78.0 1106.4M1729.9 604.0L78.0 1157.0M1769.8 604.0L78.0 1215.8M1809.6 604.0L78.0 1284.8M1849.4 604.0L78.0 1367.0M1889.2 604.0L78.0 1466.5M1890.0 624.8L78.0 1589.6M1890.0 651.6L78.0 1745.7M1890.0 734.7L363.1 1994.0M1890.0 804.2L711.3 1994.0M1890.0 913.8L1059.5 1994.0M1890.0 1112.2L1407.7 1994.0M1890.0 1581.5L1755.9 1994.0M1889.9 604.0L1890.0 604.0M1831.2 604.0L1890.0 606.9M1713.8 604.0L1890.0 613.0M1655.1 604.0L1890.0 616.2M1596.3 604.0L1890.0 619.5M1537.6 604.0L1890.0 622.9M1478.9 604.0L1890.0 626.5M1420.2 604.0L1890.0 630.1M1361.5 604.0L1890.0 634.0M1302.7 604.0L1890.0 637.9M1244.0 604.0L1890.0 642.0M1126.6 604.0L1890.0 650.7M1067.8 604.0L1890.0 655.4M1009.1 604.0L1890.0 660.2M950.4 604.0L1890.0 665.2M891.7 604.0L1890.0 670.4M833.0 604.0L1890.0 675.9M774.2 604.0L1890.0 681.6M715.5 604.0L1890.0 687.6M656.8 604.0L1890.0 693.9M539.4 604.0L1890.0 707.4M480.6 604.0L1890.0 714.7M421.9 604.0L1890.0 722.3M363.2 604.0L1890.0 730.4M304.5 604.0L1890.0 738.9M245.8 604.0L1890.0 747.9M187.0 604.0L1890.0 757.4M128.3 604.0L1890.0 767.5M78.0 604.8L1890.0 778.3M78.0 616.9L1890.0 801.9M78.0 623.5L1890.0 814.9M78.0 630.6L1890.0 828.9M78.0 638.3L1890.0 843.9M78.0 646.5L1890.0 860.1M78.0 655.4L1890.0 877.6M78.0 665.1L1890.0 896.5M78.0 675.6L1890.0 917.1M78.0 687.0L1890.0 939.5M78.0 713.3L1890.0 991.2M78.0 728.6L1890.0 1021.1M78.0 745.6L1890.0 1054.4M78.0 764.5L1890.0 1091.6M78.0 785.9L1890.0 1133.5M78.0 810.1L1890.0 1181.0M78.0 837.7L1890.0 1235.2M78.0 869.7L1890.0 1297.9M78.0 907.0L1890.0 1371.1M78.0 1004.1L1890.0 1561.7M78.0 1069.0L1890.0 1689.0M78.0 1150.2L1890.0 1848.4M78.0 1254.9L1754.5 1994.0" stroke="#3a3a3a" stroke-width="1.3" fill="none" opacity="0.8" mask="url(#mmask)"/><defs><linearGradient id="jfade" x1="0" y1="604" x2="0" y2="900" gradientUnits="userSpaceOnUse"><stop offset="0" stop-color="#fff" stop-opacity="0.1"/><stop offset="0.3" stop-color="#fff" stop-opacity="0.5"/><stop offset="1" stop-color="#fff" stop-opacity="1"/></linearGradient><mask id="jmask"><rect x="0" y="600" width="2000" height="600" fill="url(#jfade)"/></mask></defs><path d="M415.8 604.0L78.0 636.8M814.0 604.0L78.0 695.0M1212.3 604.0L78.0 797.2M1610.5 604.0L78.0 1023.5M1890.0 686.7L78.0 1950.0M1772.5 604.0L1890.0 609.9M1185.3 604.0L1890.0 646.3M598.1 604.0L1890.0 700.5M78.0 610.6L1890.0 789.7M78.0 699.5L1890.0 964.1M78.0 951.1L1890.0 1457.7" stroke="#484848" stroke-width="2" fill="none" mask="url(#jmask)"/><polygon points="836.5,835.4 1890.0,999.3 1890.0,1994.0 78.0,1994.0 78.0,1053.4" fill="#747474"/><polygon points="1483.8,1457.6 1470.2,1473.1 1453.3,1487.9 1433.1,1502.0 1409.7,1514.9 1383.3,1526.7 1354.1,1537.1 1322.3,1545.9 1288.4,1553.0 1252.7,1558.3 1215.6,1561.6 1177.6,1562.9 1139.1,1562.3 1100.8,1559.6 1063.0,1555.0 1026.3,1548.5 991.0,1540.3 957.7,1530.4 926.5,1519.1 898.0,1506.5 872.1,1492.8 849.3,1478.3 829.5,1463.0 812.9,1447.2 799.5,1431.1 789.3,1414.8 782.1,1398.5 778.0,1382.3 776.8,1366.4 778.4,1350.9 782.6,1335.9 789.3,1321.4 798.3,1307.6 809.4,1294.5 822.6,1282.1 837.5,1270.6 854.1,1259.9 872.2,1250.0 891.7,1241.0 912.4,1233.0 934.2,1225.8 957.0,1219.6 980.6,1214.2 1004.9,1209.9 1029.8,1206.4 1055.2,1203.9 1080.9,1202.3 1107.0,1201.7 1133.2,1202.0 1159.5,1203.3 1185.8,1205.5 1211.9,1208.6 1237.8,1212.6 1263.3,1217.6 1288.3,1223.6 1312.7,1230.4 1336.3,1238.2 1359.1,1246.8 1380.8,1256.4 1401.4,1266.8 1420.7,1278.1 1438.4,1290.1 1454.5,1303.0 1468.7,1316.6 1480.9,1330.8 1490.9,1345.7 1498.4,1361.0 1503.4,1376.8 1505.6,1392.9 1504.8,1409.2 1501.0,1425.5 1494.1,1441.7" fill="#979797" filter="url(#blur8)"/><path d="M849.4 837.4L78.0 1062.3M910.5 846.9L78.0 1106.4M974.5 856.9L78.0 1157.0M1041.6 867.3L78.0 1215.8M1111.9 878.3L78.0 1284.8M1185.9 889.8L78.0 1367.0M1263.7 901.9L78.0 1466.5M1345.7 914.6L78.0 1589.6M1432.1 928.1L78.0 1745.7M1620.1 957.3L363.1 1994.0M1722.5 973.2L711.3 1994.0M1831.3 990.2L1059.5 1994.0M1890.0 1112.2L1407.7 1994.0M1890.0 1581.5L1755.9 1994.0M801.6 845.4L1890.0 1021.1M750.4 860.2L1890.0 1054.4M695.4 876.0L1890.0 1091.6M636.3 893.0L1890.0 1133.5M572.5 911.3L1890.0 1181.0M503.6 931.1L1890.0 1235.2M428.8 952.6L1890.0 1297.9M347.4 976.0L1890.0 1371.1M160.8 1029.6L1890.0 1561.7M78.0 1069.0L1890.0 1689.0M78.0 1150.2L1890.0 1848.4M78.0 1254.9L1754.5 1994.0M78.0 1394.9L1241.0 1994.0M78.0 1591.5L727.6 1994.0M78.0 1888.2L214.2 1994.0" stroke="#343434" stroke-width="2" fill="none"/><path d="M1523.5 942.3L78.0 1950.0M258.4 1001.6L1890.0 1457.7" stroke="#474747" stroke-width="1.7" fill="none"/><g transform="translate(960 1050) scale(0.22237)"><defs><linearGradient id="wood" x1="0" y1="0" x2="1" y2="0"><stop offset="0" stop-color="#381204"/><stop offset="0.1" stop-color="#64240a"/><stop offset="0.28" stop-color="#943e12"/><stop offset="0.45" stop-color="#7e300e"/><stop offset="0.62" stop-color="#a04614"/><stop offset="0.8" stop-color="#84340e"/><stop offset="0.93" stop-color="#602208"/><stop offset="1" stop-color="#421604"/></linearGradient><linearGradient id="woodv" x1="0" y1="0" x2="0" y2="1"><stop offset="0" stop-color="#000" stop-opacity="0.4"/><stop offset="0.3" stop-color="#000" stop-opacity="0.05"/><stop offset="1" stop-color="#000" stop-opacity="0.1"/></linearGradient><linearGradient id="skin" x1="0" y1="0" x2="1" y2="0"><stop offset="0" stop-color="#9a9a9a"/><stop offset="0.2" stop-color="#d4d4d4"/><stop offset="0.5" stop-color="#dadada"/><stop offset="0.75" stop-color="#c4c4c4"/><stop offset="1" stop-color="#7c7c7c"/></linearGradient><linearGradient id="head" x1="0" y1="0" x2="1" y2="0.6"><stop offset="0" stop-color="#b6b6b6"/><stop offset="0.6" stop-color="#acacac"/><stop offset="1" stop-color="#9a9a9a"/></linearGradient><linearGradient id="bevel" x1="0" y1="0" x2="1" y2="0.5"><stop offset="0" stop-color="#cdcdcd"/><stop offset="0.6" stop-color="#c0c0c0"/><stop offset="1" stop-color="#7a7a7a"/></linearGradient><pattern id="grain" width="46" height="600" patternUnits="userSpaceOnUse" patternTransform="skewX(-3)"><path d="M5 0 V600 M17 0 V600 M24 0 V600 M37 0 V600" stroke="#2a0c02" stroke-width="3.500" opacity="0.42"/><path d="M11 0 V600 M31 0 V600 M42 0 V600" stroke="#d8702a" stroke-width="3" opacity="0.34"/></pattern></defs><path d="M440 985 C430 1100 360 1200 325 1272 C350 1370 500 1420 625 1420 C760 1420 890 1370 925 1275 C890 1200 840 1100 835 985 Z" fill="url(#wood)"/><path d="M440 985 C430 1100 360 1200 325 1272 C350 1370 500 1420 625 1420 C760 1420 890 1370 925 1275 C890 1200 840 1100 835 985 Z" fill="url(#grain)"/><path d="M440 985 C430 1100 360 1200 325 1272 C350 1370 500 1420 625 1420 C760 1420 890 1370 925 1275 C890 1200 840 1100 835 985 Z" fill="url(#woodv)"/><path d="M250 480 C270 640 330 800 440 990 C560 1030 720 1030 840 985 C940 820 1010 660 1045 480 Z" fill="url(#wood)"/><path d="M250 480 C270 640 330 800 440 990 C560 1030 720 1030 840 985 C940 820 1010 660 1045 480 Z" fill="url(#grain)"/><path d="M250 480 C270 640 330 800 440 990 L540 1005 C440 820 400 660 385 500 Z" fill="#000" opacity="0.22"/><path d="M1045 480 C1010 660 940 820 840 985 L780 1000 C880 820 930 660 950 500 Z" fill="#000" opacity="0.12"/><path d="M250 480 H1045 L1030 560 C800 620 480 620 262 560 Z" fill="#000" opacity="0.3"/><path d="M392 1112 L928 1290" stroke="#6e6e6e" stroke-width="7" opacity="0.9"/><path d="M330 790 C350 900 520 945 640 940 C780 940 920 900 945 805" fill="none" stroke="#25282b" stroke-width="42" stroke-linecap="round"/><path d="M333 782 C360 885 520 922 640 918 C780 918 915 880 942 795" fill="none" stroke="#43484c" stroke-width="9" opacity="0.75"/><path d="M436 935 C470 992 560 1014 640 1012 C730 1012 820 987 852 935" fill="none" stroke="#25282b" stroke-width="32" stroke-linecap="round"/><path d="M440 928 C474 982 560 1000 640 998 C730 998 816 976 848 928" fill="none" stroke="#43484c" stroke-width="7" opacity="0.6"/></g><g transform="translate(970 1060) scale(0.11456)"><path d="M105 560 C120 740 400 900 700 945 C1000 990 1400 990 1650 955 C1950 905 2250 760 2290 560 C2100 720 1700 810 1250 810 C800 810 300 730 105 560 Z" fill="url(#skin)"/><path d="M1020 850 H1230 V975 H1020 Z" fill="#c4c4c4" opacity="0.5"/><path d="M1230 850 H1440 V972 H1230 Z" fill="#cdcdcd" opacity="0.5"/><path d="M160 700 C300 1000 440 1350 560 1590" fill="none" stroke="#25282b" stroke-width="46" stroke-linecap="round" stroke-linejoin="round"/><path d="M160 700 C300 1000 440 1350 560 1590" fill="none" stroke="#43484c" stroke-width="11.5" stroke-linecap="round" stroke-linejoin="round" opacity="0.6" transform="translate(-4 -3)"/><path d="M240 770 C340 1000 480 1350 610 1640" fill="none" stroke="#25282b" stroke-width="36" stroke-linecap="round" stroke-linejoin="round"/><path d="M240 770 C340 1000 480 1350 610 1640" fill="none" stroke="#43484c" stroke-width="9.0" stroke-linecap="round" stroke-linejoin="round" opacity="0.6" transform="translate(-4 -3)"/><path d="M2210 700 C2100 1000 1900 1400 1790 1560" fill="none" stroke="#25282b" stroke-width="46" stroke-linecap="round" stroke-linejoin="round"/><path d="M2210 700 C2100 1000 1900 1400 1790 1560" fill="none" stroke="#43484c" stroke-width="11.5" stroke-linecap="round" stroke-linejoin="round" opacity="0.6" transform="translate(-4 -3)"/><path d="M2115 810 C2020 1050 1860 1400 1740 1620" fill="none" stroke="#25282b" stroke-width="36" stroke-linecap="round" stroke-linejoin="round"/><path d="M2115 810 C2020 1050 1860 1400 1740 1620" fill="none" stroke="#43484c" stroke-width="9.0" stroke-linecap="round" stroke-linejoin="round" opacity="0.6" transform="translate(-4 -3)"/><path d="M790 960 C830 1200 900 1550 1020 1850" fill="none" stroke="#25282b" stroke-width="46" stroke-linecap="round" stroke-linejoin="round"/><path d="M790 960 C830 1200 900 1550 1020 1850" fill="none" stroke="#43484c" stroke-width="11.5" stroke-linecap="round" stroke-linejoin="round" opacity="0.6" transform="translate(-4 -3)"/><path d="M880 975 C910 1200 980 1550 1090 1860" fill="none" stroke="#25282b" stroke-width="38" stroke-linecap="round" stroke-linejoin="round"/><path d="M880 975 C910 1200 980 1550 1090 1860" fill="none" stroke="#43484c" stroke-width="9.5" stroke-linecap="round" stroke-linejoin="round" opacity="0.6" transform="translate(-4 -3)"/><path d="M1645 960 C1620 1200 1560 1550 1420 1850" fill="none" stroke="#25282b" stroke-width="46" stroke-linecap="round" stroke-linejoin="round"/><path d="M1645 960 C1620 1200 1560 1550 1420 1850" fill="none" stroke="#43484c" stroke-width="11.5" stroke-linecap="round" stroke-linejoin="round" opacity="0.6" transform="translate(-4 -3)"/><path d="M1565 975 C1545 1200 1480 1550 1340 1860" fill="none" stroke="#25282b" stroke-width="38" stroke-linecap="round" stroke-linejoin="round"/><path d="M1565 975 C1545 1200 1480 1550 1340 1860" fill="none" stroke="#43484c" stroke-width="9.5" stroke-linecap="round" stroke-linejoin="round" opacity="0.6" transform="translate(-4 -3)"/><path d="M250 745 L560 965 L720 935" fill="none" stroke="#25282b" stroke-width="32" stroke-linecap="round" stroke-linejoin="round"/><path d="M250 745 L560 965 L720 935" fill="none" stroke="#43484c" stroke-width="8.0" stroke-linecap="round" stroke-linejoin="round" opacity="0.6" transform="translate(-4 -3)"/><path d="M830 995 L1050 1085 L1460 1045 L1610 975" fill="none" stroke="#25282b" stroke-width="36" stroke-linecap="round" stroke-linejoin="round"/><path d="M830 995 L1050 1085 L1460 1045 L1610 975" fill="none" stroke="#43484c" stroke-width="9.0" stroke-linecap="round" stroke-linejoin="round" opacity="0.6" transform="translate(-4 -3)"/><path d="M1700 965 L1870 985 L2150 745" fill="none" stroke="#25282b" stroke-width="32" stroke-linecap="round" stroke-linejoin="round"/><path d="M1700 965 L1870 985 L2150 745" fill="none" stroke="#43484c" stroke-width="8.0" stroke-linecap="round" stroke-linejoin="round" opacity="0.6" transform="translate(-4 -3)"/><ellipse cx="1185" cy="438" rx="830" ry="318" fill="url(#bevel)"/><ellipse cx="1165" cy="412" rx="740" ry="268" fill="url(#head)"/><path d="M1060 690 H1225 V748 H1060 Z M1225 685 H1390 V745 H1225 Z" fill="#b9b9b9" opacity="0.5"/><path d="M205 470 a985 372 0 1 0 1970 0 a985 372 0 1 0 -1970 0 Z M364 438 a821 312 0 1 0 1642 0 a821 312 0 1 0 -1642 0 Z" fill="#25282b" fill-rule="evenodd"/><path d="M300 600 C420 700 800 775 1250 775 C1700 775 2000 700 2100 600" fill="none" stroke="#43484c" stroke-width="16" opacity="0.7"/><path d="M330 330 C280 380 250 420 250 470 M2050 310 C2100 360 2130 410 2130 460" fill="none" stroke="#43484c" stroke-width="12" opacity="0.5"/><g transform="rotate(0 1100 88)"><ellipse cx="1100" cy="88" rx="95" ry="38" fill="#25282b"/><ellipse cx="1085.75" cy="70.9" rx="47.5" ry="7.6000000000000005" fill="#43484c" opacity="0.6"/></g><g transform="rotate(-28 400 250)"><ellipse cx="400" cy="250" rx="150" ry="75" fill="#25282b"/><ellipse cx="377.5" cy="216.25" rx="75.0" ry="15.0" fill="#43484c" opacity="0.6"/></g><g transform="rotate(28 1850 215)"><ellipse cx="1850" cy="215" rx="140" ry="70" fill="#25282b"/><ellipse cx="1829.0" cy="183.5" rx="70.0" ry="14.0" fill="#43484c" opacity="0.6"/></g><g transform="rotate(-8 265 575)"><ellipse cx="275" cy="503.5" rx="99.2" ry="80.6" fill="#25282b"/><ellipse cx="265" cy="620.5" rx="160" ry="80.6" fill="#25282b"/><ellipse cx="249.0" cy="590.6" rx="99.2" ry="18.200000000000003" fill="#43484c" opacity="0.7"/><ellipse cx="265" cy="464.5" rx="48.0" ry="15.6" fill="#43484c" opacity="0.6"/></g><g transform="rotate(10 2140 555)"><ellipse cx="2150" cy="480.75" rx="96.1" ry="83.7" fill="#25282b"/><ellipse cx="2140" cy="602.25" rx="155" ry="83.7" fill="#25282b"/><ellipse cx="2124.5" cy="571.2" rx="96.1" ry="18.900000000000002" fill="#43484c" opacity="0.7"/><ellipse cx="2140" cy="440.25" rx="46.5" ry="16.2" fill="#43484c" opacity="0.6"/></g><g transform="rotate(0 835 810)"><ellipse cx="845" cy="727.5" rx="99.2" ry="93.0" fill="#25282b"/><ellipse cx="835" cy="862.5" rx="160" ry="93.0" fill="#25282b"/><ellipse cx="819.0" cy="828.0" rx="99.2" ry="21.000000000000004" fill="#43484c" opacity="0.7"/><ellipse cx="835" cy="682.5" rx="48.0" ry="18.0" fill="#43484c" opacity="0.6"/></g><g transform="rotate(0 1700 805)"><ellipse cx="1710" cy="723.6" rx="97.96" ry="91.76" fill="#25282b"/><ellipse cx="1700" cy="856.8" rx="158" ry="91.76" fill="#25282b"/><ellipse cx="1684.2" cy="822.76" rx="97.96" ry="20.720000000000002" fill="#43484c" opacity="0.7"/><ellipse cx="1700" cy="679.2" rx="47.4" ry="17.759999999999998" fill="#43484c" opacity="0.6"/></g><path d="M1090 497H1266M1178 409V585M1082 575H1258M1170 487V663M1282 515H1458M1370 427V603M1465 585H1641M1553 497V673M610 775H786M698 687V863" stroke="#00f000" stroke-width="17" fill="none"/><path d="M490 1360 L565 1380" stroke="#1e7be0" stroke-width="14"/></g><g transform="translate(960 1050) scale(0.22237)"><path d="M581 826H669M625 782V870M551 862H639M595 818V906M694 858H782M738 814V902" stroke="#00f000" stroke-width="8.500" fill="none"/></g><rect x="78" y="1620" width="1812" height="374" fill="#000" opacity="0.3"/><path d="M1128.5 231L1001 758.2M1128.5 231L1048.2 790.2M1128.5 231L1202.3 744.7M1128.5 231L1271.7 775.8" stroke="#8e8e8e" stroke-width="2" fill="none"/><ellipse cx="1131.4" cy="769" rx="156" ry="25" fill="none" stroke="#8e8e8e" stroke-width="2" transform="rotate(-1 1131 769)"/><path d="M1128.5 231L985 748.7M1128.5 231L1036.2 787M1128.5 231L1210.2 735.1M1128.5 231L1291.7 769.4M985 748.7L1001 758.2M1036.2 787L1048.2 790.2M1210.2 735.1L1202.3 744.7M1291.7 769.4L1271.7 775.8" stroke="#fff" stroke-width="2" fill="none"/><ellipse cx="1132" cy="762.6" rx="178" ry="28.4" fill="none" stroke="#fff" stroke-width="2" transform="rotate(-1 1132 762.6)"/><polygon points="1109.3,277.6 1127.5,243.2 1127.5,280.6" fill="#e08a1e"/><path d="M1128.5 231 V791" stroke="#fff" stroke-width="2.6"/><circle cx="1130.4" cy="791" r="9.6" fill="#fbe159"/><polygon points="960.7,233 989,230.5 1019,230 989,235 983,239.6" fill="#0a4fd8"/><path d="M1063.4 234 Q1088 240 1125.4 236" stroke="#10c030" stroke-width="2.2" fill="none"/><path d="M1171 230 L1203 235" stroke="#d8102a" stroke-width="2"/><polygon points="1203,235 1211.4,230 1221.5,238 1208.3,244.2" fill="#d8102a"/></g></svg>
<div class="a " style="left:84px;top:235px;width:132px;height:32px;background:#1c1c1c;border-radius:4px;"></div>
<div class="a t" style="left:87.50px;top:235.85px;font-size:22px;line-height:30.80px;color:#dcdcdc;letter-spacing:0.506px;">Perspective</div>
<div class="a " style="left:877px;top:235px;width:210px;height:32px;background:#1c1c1c;border-radius:4px;"></div>
<div class="a t" style="left:882.00px;top:235.85px;font-size:22px;line-height:30.80px;color:#dcdcdc;letter-spacing:0.611px;">Default Camera</div>
<svg class="a" style="left:1055px;top:240px;" width="26" height="22" viewBox="0 0 26 22"><path d="M2 9 H17 V20 H2 Z" stroke="#a8b4cc" stroke-width="2.400" fill="none"/><path d="M4 8 V3 H12 a3 3 0 0 1 3 3 V8" stroke="#a8b4cc" stroke-width="2.200" fill="none"/><polygon points="19,13 25,8 25,20" fill="#a8b4cc"/><path d="M19 14 V20" stroke="#a8b4cc" stroke-width="2"/></svg>
<div class="a " style="left:83px;top:800px;width:112px;height:32px;background:#1c1c1c;border-radius:4px;"></div>
<div class="a t" style="left:87.00px;top:800.85px;font-size:22px;line-height:30.80px;color:#dcdcdc;letter-spacing:-0.931px;">Move</div>
<svg class="a" style="left:166px;top:806px;" width="20" height="20" viewBox="0 0 20 20"><path d="M10 10 L10 1 M13 4 L10 1 L7 4 M10 10 L10 19 M7 16 L10 19 L13 16 M10 10 L1 10 M4 7 L1 10 L4 13 M10 10 L19 10 M16 13 L19 10 L16 7 " fill="none" stroke="#b0b0b0" stroke-width="1.8" stroke-linejoin="miter"/></svg>
<div class="a " style="left:84px;top:1956px;width:252px;height:32px;background:#3c3c3c;border-radius:4px;"></div>
<div class="a t" style="left:87.50px;top:1956.85px;font-size:22px;line-height:30.80px;color:#e0e0e0;letter-spacing:0.549px;">View Transform: Scene</div>
<div class="a " style="left:1610px;top:1956px;width:274px;height:32px;background:#3c3c3c;border-radius:4px;"></div>
<div class="a t" style="left:1614.00px;top:1956.85px;font-size:22px;line-height:30.80px;color:#e0e0e0;letter-spacing:0.718px;">Grid Spacing : 500 cm</div>
<svg class="a" style="left:1760px;top:236px;" width="130" height="90" viewBox="0 0 130 90"><path d="M61 61 V28" stroke="#22c55e" stroke-width="2"/><path d="M61 61 L81 51" stroke="#e0343e" stroke-width="2"/><path d="M61 61 L32 55" stroke="#1e7be0" stroke-width="2"/></svg>
<div class="a t" style="left:1813.66px;top:232.85px;font-size:22px;line-height:30.80px;color:#22c55e;letter-spacing:0.000px;">Y</div>
<div class="a t" style="left:1847.66px;top:264.85px;font-size:22px;line-height:30.80px;color:#e0343e;letter-spacing:0.000px;">X</div>
<div class="a t" style="left:1769.28px;top:272.85px;font-size:22px;line-height:30.80px;color:#1e7be0;letter-spacing:0.000px;">Z</div>
<div class="a " style="left:1898px;top:183px;width:549px;height:1813px;background:#2b2b2b;"></div>
<div class="a " style="left:1898px;top:229px;width:549px;height:2px;background:#232323;"></div>
<div class="a " style="left:2447px;top:183px;width:3px;height:1815px;background:#1e1e1e;"></div>
<svg class="a" style="left:1911px;top:193px;" width="28" height="22" viewBox="0 0 28 22"><path d="M0 3 H28 M0 11 H28 M0 19 H28" fill="none" stroke="#b4b4b4" stroke-width="3.6" stroke-linecap="butt" stroke-linejoin="miter" /></svg>
<div class="a t" style="left:1958.00px;top:188.85px;font-size:22px;line-height:30.80px;color:#b4b4b4;letter-spacing:0.394px;">Create</div>
<div class="a t" style="left:2056.00px;top:188.85px;font-size:22px;line-height:30.80px;color:#b4b4b4;letter-spacing:0.530px;">Edit</div>
<div class="a t" style="left:2126.70px;top:188.85px;font-size:22px;line-height:30.80px;color:#b4b4b4;letter-spacing:0.505px;">View</div>
<div class="a t" style="left:2206.40px;top:188.85px;font-size:22px;line-height:30.80px;color:#b4b4b4;letter-spacing:0.691px;">Select</div>
<div class="a t" style="left:2302.50px;top:188.85px;font-size:22px;line-height:30.80px;color:#b4b4b4;letter-spacing:0.680px;">Material</div>
<svg class="a" style="left:2410px;top:190px;" width="32" height="32" viewBox="0 0 32 32"><circle cx="13" cy="13" r="9" fill="none" stroke="#b2b2b2" stroke-width="2.8" stroke-linecap="butt" stroke-linejoin="miter" /><path d="M19.5 19.5 L30 30" fill="none" stroke="#b2b2b2" stroke-width="3" stroke-linecap="butt" stroke-linejoin="miter" /></svg>
<svg class="a" style="left:1902px;top:246px;" width="12.4" height="37.2" viewBox="0 0 12.4 37.2"><rect x="0.0" y="0.0" width="2.2" height="2.2" fill="#444"/><rect x="0.0" y="6.2" width="2.2" height="2.2" fill="#444"/><rect x="0.0" y="12.4" width="2.2" height="2.2" fill="#444"/><rect x="0.0" y="18.6" width="2.2" height="2.2" fill="#444"/><rect x="0.0" y="24.8" width="2.2" height="2.2" fill="#444"/><rect x="0.0" y="31.0" width="2.2" height="2.2" fill="#444"/><rect x="6.2" y="0.0" width="2.2" height="2.2" fill="#444"/><rect x="6.2" y="6.2" width="2.2" height="2.2" fill="#444"/><rect x="6.2" y="12.4" width="2.2" height="2.2" fill="#444"/><rect x="6.2" y="18.6" width="2.2" height="2.2" fill="#444"/><rect x="6.2" y="24.8" width="2.2" height="2.2" fill="#444"/><rect x="6.2" y="31.0" width="2.2" height="2.2" fill="#444"/></svg>
<div class="a " style="left:1914px;top:232px;width:112px;height:56px;background:#3b3b3b;border-radius:7px;"></div>
<svg class="a" style="left:1914px;top:232px;" width="56" height="56" viewBox="0 0 56 56"><path d="M28 13 V43 M13 28 H43" fill="none" stroke="#c0c0c0" stroke-width="3.2" stroke-linecap="butt" stroke-linejoin="miter" /><polygon points="55,46 55,55 46,55" fill="#9a9a9a"/></svg>
<div class="a " style="left:1969px;top:234px;width:2px;height:52px;background:#303030;"></div>
<svg class="a" style="left:1970px;top:232px;" width="56" height="56" viewBox="0 0 56 56"><circle cx="28" cy="28" r="17" fill="#5c5c5c"  stroke="#b8b8b8" stroke-width="3.2" stroke-linecap="butt" stroke-linejoin="miter" /><circle cx="22" cy="21" r="3.6" fill="#b8b8b8"/><path d="M37 27 a10 10 0 0 1 -8 10" fill="none" stroke="#b8b8b8" stroke-width="2.8" stroke-linecap="butt" stroke-linejoin="miter" /></svg>
<div class="a " style="left:2034px;top:232px;width:112px;height:56px;background:#393939;border-radius:7px;"></div>
<div class="a " style="left:2090px;top:232px;width:56px;height:56px;background:#3b3b3b;border-radius:0 7px 7px 0;"></div>
<svg class="a" style="left:2034px;top:232px;" width="56" height="56" viewBox="0 0 56 56"><path d="M17 40 L39 18 M24 17 H40 V33" fill="none" stroke="#585858" stroke-width="2.6" stroke-linecap="butt" stroke-linejoin="miter" /></svg>
<div class="a " style="left:2089px;top:234px;width:2px;height:52px;background:#303030;"></div>
<svg class="a" style="left:2090px;top:232px;" width="56" height="56" viewBox="0 0 56 56"><path d="M14 42 V36 L29 21 L35 27 L20 42 Z" fill="none" stroke="#b2b2b2" stroke-width="2.8" stroke-linecap="butt" stroke-linejoin="miter" /><path d="M27 17 L39 29" fill="none" stroke="#b2b2b2" stroke-width="4.2" stroke-linecap="butt" stroke-linejoin="miter" /><path d="M32 22 L37 17 a4.2 4.2 0 0 1 6 6 L38 28 Z" fill="#b2b2b2"/></svg>
<div class="a " style="left:2390px;top:232px;width:56px;height:56px;background:#393939;border-radius:7px;"></div>
<svg class="a" style="left:2390px;top:232px;" width="56" height="56" viewBox="0 0 56 56"><path d="M17 19 H39 M24 18 V14 H32 V18 M19.5 19 V41 a2 2 0 0 0 2 2 H34.500 a2 2 0 0 0 2 -2 V19" fill="none" stroke="#4c4c4c" stroke-width="2.8" stroke-linecap="butt" stroke-linejoin="miter" /><path d="M25 24 V37 M31 24 V37" fill="none" stroke="#4c4c4c" stroke-width="3.4" stroke-linecap="butt" stroke-linejoin="miter" /></svg>
<svg class="a" style="left:0;top:0" width="0" height="0"><defs><pattern id="chk" width="27" height="27" patternUnits="userSpaceOnUse"><rect width="27" height="27" fill="#b9bbbe"/><rect width="13.5" height="13.5" fill="#85878a"/><rect x="13.5" y="13.5" width="13.5" height="13.5" fill="#85878a"/></pattern><linearGradient id="mfloor" x1="0" y1="0" x2="0" y2="1"><stop offset="0" stop-color="#8f9aa8"/><stop offset="0.5" stop-color="#a4afbe"/><stop offset="1" stop-color="#c4c6c8"/></linearGradient><pattern id="mstripe" width="40" height="9" patternUnits="userSpaceOnUse"><rect width="40" height="4" fill="#6d7f98" opacity="0.45"/></pattern><filter id="b2"><feGaussianBlur stdDeviation="1.6"/></filter><filter id="b3" x="-50%" y="-50%" width="200%" height="200%"><feGaussianBlur stdDeviation="4"/></filter><filter id="b1"><feGaussianBlur stdDeviation="0.8"/></filter><radialGradient id="g_carpet" cx="0.36" cy="0.32" r="0.75"><stop offset="0" stop-color="#ebe8dc"/><stop offset="0.45" stop-color="#d4d0c2"/><stop offset="0.8" stop-color="#86867e"/><stop offset="1" stop-color="#3c4048"/></radialGradient><radialGradient id="g_rattan" cx="0.36" cy="0.32" r="0.75"><stop offset="0" stop-color="#5a5a5c"/><stop offset="0.45" stop-color="#303032"/><stop offset="0.8" stop-color="#161618"/><stop offset="1" stop-color="#0c0e12"/></radialGradient><radialGradient id="g_walnut" cx="0.36" cy="0.32" r="0.75"><stop offset="0" stop-color="#a87458"/><stop offset="0.45" stop-color="#70381c"/><stop offset="0.8" stop-color="#38180a"/><stop offset="1" stop-color="#120804"/></radialGradient><radialGradient id="g_larch" cx="0.36" cy="0.32" r="0.75"><stop offset="0" stop-color="#c86e38"/><stop offset="0.45" stop-color="#a04a1e"/><stop offset="0.8" stop-color="#5a1e0a"/><stop offset="1" stop-color="#1c0804"/></radialGradient><radialGradient id="g_mat" cx="0.36" cy="0.32" r="0.75"><stop offset="0" stop-color="#d8d8d8"/><stop offset="0.45" stop-color="#8c8c8c"/><stop offset="0.8" stop-color="#4a4c50"/><stop offset="1" stop-color="#1c2026"/></radialGradient><linearGradient id="mshade" x1="0.2" y1="0.1" x2="0.95" y2="0.85"><stop offset="0.38" stop-color="#000" stop-opacity="0"/><stop offset="0.7" stop-color="#04080c" stop-opacity="0.55"/><stop offset="1" stop-color="#0a1018" stop-opacity="0.85"/></linearGradient><clipPath id="sphc"><circle cx="60" cy="60" r="51"/></clipPath><g id="th_carpet"><rect x="-13.500" y="-13.500" width="148.500" height="148.500" fill="url(#chk)" filter="url(#b1)"/><rect y="68" width="120" height="52" fill="url(#mfloor)"/><rect y="68" width="120" height="52" fill="url(#mstripe)"/><ellipse cx="70" cy="108" rx="44" ry="8" fill="#10141a" opacity="0.5" filter="url(#b2)"/><circle cx="60" cy="60" r="51" fill="url(#g_carpet)"/><circle cx="60" cy="60" r="51" fill="url(#mshade)"/><g clip-path="url(#sphc)"><path d="M103 36 Q114 60 101 88" stroke="#5c6c80" stroke-width="6" fill="none" opacity="0.5" filter="url(#b2)"/></g></g><g id="th_rattan"><rect x="-13.500" y="-13.500" width="148.500" height="148.500" fill="url(#chk)" filter="url(#b1)"/><rect y="68" width="120" height="52" fill="url(#mfloor)"/><rect y="68" width="120" height="52" fill="url(#mstripe)"/><ellipse cx="70" cy="108" rx="44" ry="8" fill="#10141a" opacity="0.5" filter="url(#b2)"/><circle cx="60" cy="60" r="51" fill="url(#g_rattan)"/><circle cx="60" cy="60" r="51" fill="url(#mshade)"/><g clip-path="url(#sphc)"><path d="M100 34 Q113 58 102 84" stroke="#7890a8" stroke-width="4" fill="none" opacity="0.55" filter="url(#b1)"/></g></g><g id="th_walnut"><rect x="-13.500" y="-13.500" width="148.500" height="148.500" fill="url(#chk)" filter="url(#b1)"/><rect y="68" width="120" height="52" fill="url(#mfloor)"/><rect y="68" width="120" height="52" fill="url(#mstripe)"/><ellipse cx="70" cy="108" rx="44" ry="8" fill="#10141a" opacity="0.5" filter="url(#b2)"/><circle cx="60" cy="60" r="51" fill="url(#g_walnut)"/><circle cx="60" cy="60" r="51" fill="url(#mshade)"/><g clip-path="url(#sphc)"><ellipse cx="40" cy="40" rx="12" ry="16" fill="#f0d0c0" opacity="0.3" filter="url(#b3)" transform="rotate(20 40 40)"/><path d="M101 32 Q115 58 103 86" stroke="#b8c8dc" stroke-width="4" fill="none" opacity="0.65" filter="url(#b1)"/></g></g><g id="th_larch"><rect x="-13.500" y="-13.500" width="148.500" height="148.500" fill="url(#chk)" filter="url(#b1)"/><rect y="68" width="120" height="52" fill="url(#mfloor)"/><rect y="68" width="120" height="52" fill="url(#mstripe)"/><ellipse cx="70" cy="108" rx="44" ry="8" fill="#10141a" opacity="0.5" filter="url(#b2)"/><circle cx="60" cy="60" r="51" fill="url(#g_larch)"/><circle cx="60" cy="60" r="51" fill="url(#mshade)"/><g clip-path="url(#sphc)" opacity="0.55"><path d="M5 22 Q60 32 115 20" stroke="#5a1a06" stroke-width="1.5" fill="none"/><path d="M5 30 Q60 40 115 28" stroke="#5a1a06" stroke-width="2.5" fill="none"/><path d="M5 37 Q60 47 115 35" stroke="#5a1a06" stroke-width="1.2" fill="none"/><path d="M5 44 Q60 54 115 42" stroke="#5a1a06" stroke-width="2.2" fill="none"/><path d="M5 52 Q60 62 115 50" stroke="#5a1a06" stroke-width="1.4" fill="none"/><path d="M5 58 Q60 68 115 56" stroke="#5a1a06" stroke-width="2.8" fill="none"/><path d="M5 66 Q60 76 115 64" stroke="#5a1a06" stroke-width="1.4" fill="none"/><path d="M5 73 Q60 83 115 71" stroke="#5a1a06" stroke-width="2.4" fill="none"/><path d="M5 80 Q60 90 115 78" stroke="#5a1a06" stroke-width="1.4" fill="none"/><path d="M5 88 Q60 98 115 86" stroke="#5a1a06" stroke-width="2.2" fill="none"/><path d="M5 96 Q60 106 115 94" stroke="#5a1a06" stroke-width="1.5" fill="none"/></g></g><g id="th_mat"><rect x="-13.500" y="-13.500" width="148.500" height="148.500" fill="url(#chk)" filter="url(#b1)"/><rect y="68" width="120" height="52" fill="url(#mfloor)"/><rect y="68" width="120" height="52" fill="url(#mstripe)"/><ellipse cx="70" cy="108" rx="44" ry="8" fill="#10141a" opacity="0.5" filter="url(#b2)"/><circle cx="60" cy="60" r="51" fill="url(#g_mat)"/><circle cx="60" cy="60" r="51" fill="url(#mshade)"/><g clip-path="url(#sphc)"><rect x="26" y="30" width="22" height="26" fill="#fff" opacity="0.55" filter="url(#b2)" transform="rotate(-12 37 43)"/><path d="M100 32 Q114 55 104 84" stroke="#dfe8f4" stroke-width="5" fill="none" opacity="0.8" filter="url(#b1)"/></g></g><g id="th_q"><rect width="120" height="120" fill="url(#chk)"/><rect y="68" width="120" height="52" fill="url(#mfloor)"/><rect y="68" width="120" height="52" fill="url(#mstripe)"/></g></defs></svg>
<svg class="a" style="left:1900px;top:294px;overflow:hidden" width="120" height="120" viewBox="0 0 120 120"><use href="#th_carpet"/></svg>
<div class="a t" style="left:1904.70px;top:412.85px;font-size:22px;line-height:30.80px;color:#b4b4b4;letter-spacing:0.457px;">Carpet Cro</div>
<svg class="a" style="left:2028px;top:294px;overflow:hidden" width="120" height="120" viewBox="0 0 120 120"><use href="#th_rattan"/></svg>
<div class="a t" style="left:2032.70px;top:412.85px;font-size:22px;line-height:30.80px;color:#b4b4b4;letter-spacing:0.438px;">Rattan 05 I</div>
<svg class="a" style="left:2156px;top:294px;overflow:hidden" width="120" height="120" viewBox="0 0 120 120"><use href="#th_walnut"/></svg>
<div class="a t" style="left:2160.70px;top:412.85px;font-size:22px;line-height:30.80px;color:#b4b4b4;letter-spacing:0.303px;">Wood Walr</div>
<svg class="a" style="left:2284px;top:294px;overflow:hidden" width="120" height="120" viewBox="0 0 120 120"><use href="#th_larch"/></svg>
<div class="a t" style="left:2288.70px;top:412.85px;font-size:22px;line-height:30.80px;color:#b4b4b4;letter-spacing:0.503px;">Wood Larc</div>
<svg class="a" style="left:1900px;top:452px;overflow:hidden" width="120" height="120" viewBox="0 0 120 120"><use href="#th_mat"/></svg>
<div class="a t" style="left:1904.70px;top:570.85px;font-size:22px;line-height:30.80px;color:#b4b4b4;letter-spacing:0.414px;">Mat</div>
<div class="a " style="left:1900px;top:1936px;width:544px;height:2px;background:#353535;"></div>
<div class="a " style="left:1910px;top:1949px;width:110px;height:37px;background:#3b3b3b;border-radius:7px;"></div>
<div class="a " style="left:1948px;top:1950px;width:34px;height:35px;background:#555a9c;"></div>
<svg class="a" style="left:1914px;top:1953px;" width="30" height="30" viewBox="0 0 30 30"><path d="M8 7 H28 M8 15 H28 M8 23 H28" stroke="#c8c8c8" stroke-width="3.4"/><circle cx="3" cy="7" r="1.6" fill="#c8c8c8"/><circle cx="3" cy="15" r="1.6" fill="#c8c8c8"/><circle cx="3" cy="23" r="1.6" fill="#c8c8c8"/></svg>
<svg class="a" style="left:1950px;top:1953px;" width="30" height="30" viewBox="0 0 30 30"><rect x="4" y="3" width="9" height="9" rx="1.5" fill="none" stroke="#d4d0b8" stroke-width="2.2"/><rect x="17" y="3" width="9" height="9" rx="1.5" fill="none" stroke="#d4d0b8" stroke-width="2.2"/><rect x="4" y="17" width="9" height="9" rx="1.5" fill="none" stroke="#d4d0b8" stroke-width="2.2"/><rect x="17" y="17" width="9" height="9" rx="1.5" fill="none" stroke="#d4d0b8" stroke-width="2.2"/></svg>
<svg class="a" style="left:1986px;top:1953px;" width="30" height="30" viewBox="0 0 30 30"><path d="M4 8 V27 H23" fill="none" stroke="#c0c0c0" stroke-width="2.2"/><rect x="8" y="2" width="21" height="21" rx="3" fill="#c0c0c0"/></svg>
<div class="a " style="left:2292px;top:1963.5px;width:142px;height:9px;background:#1a1a1a;border-radius:5px;"></div>
<div class="a " style="left:2292px;top:1963.5px;width:94px;height:9px;background:#555a9c;border-radius:5px;"></div>
<div class="a " style="left:2374px;top:1958px;width:20px;height:20px;background:#555a9c;border-radius:10px;"></div>
<div class="a " style="left:2450px;top:183px;width:75px;height:1813px;background:#2b2b2b;"></div>
<div class="a " style="left:2522px;top:183px;width:4px;height:1815px;background:#232323;"></div>
<div class="a " style="left:2450px;top:180px;width:72px;height:72px;background:#3b3b3b;border-radius:8px;"></div>
<svg class="a" style="left:2450px;top:180px;" width="72" height="72" viewBox="0 0 72 72"><path d="M21.500 16 V52.500 H55 M13.500 24.500 L21.500 15.500 L29.500 24.500 M47.500 44.500 L56 52.500 L47.500 60.500" fill="none" stroke="#c3caf8" stroke-width="4.4" stroke-linecap="butt" stroke-linejoin="miter" /><circle cx="46.500" cy="25.500" r="11.500" fill="#c3caf8"/></svg>
<div class="a " style="left:2450px;top:272px;width:72px;height:216px;background:#3b3b3b;border-radius:8px;"></div>
<svg class="a" style="left:2450px;top:272px;" width="72" height="72" viewBox="0 0 72 72"><rect x="18" y="18" width="37" height="37" fill="none" stroke="#86d6f8" stroke-width="4" stroke-linecap="butt" stroke-linejoin="miter" /><polygon points="70,60 70,70 60,70" fill="#8a8a8a"/></svg>
<div class="a " style="left:2452px;top:343px;width:68px;height:2px;background:#303030;"></div>
<svg class="a" style="left:2450px;top:344px;" width="72" height="72" viewBox="0 0 72 72"><polygon points="36.00,14.00 55.92,25.50 55.92,48.50 36.00,60.00 16.08,48.50 16.08,25.50" fill="#86d6f8"/><path d="M36 37 L55.9 25.5 M36 37 L16.1 25.5 M36 37 V60" stroke="#3b3b3b" stroke-width="2.6"/><polygon points="70,60 70,70 60,70" fill="#8a8a8a"/></svg>
<div class="a " style="left:2452px;top:415px;width:68px;height:2px;background:#303030;"></div>
<svg class="a" style="left:2450px;top:416px;" width="72" height="72" viewBox="0 0 72 72"><path d="M17 24 V17 H55 V24 M36 17 V56 M26 56 H46" fill="none" stroke="#86d6f8" stroke-width="4" stroke-linecap="butt" stroke-linejoin="miter" /><polygon points="70,60 70,70 60,70" fill="#8a8a8a"/></svg>
<div class="a " style="left:2450px;top:508px;width:72px;height:216px;background:#3b3b3b;border-radius:8px;"></div>
<svg class="a" style="left:2450px;top:508px;" width="72" height="72" viewBox="0 0 72 72"><circle cx="36" cy="36" r="12" fill="#5fe07e"/><polygon points="36.00,14.50 54.62,25.25 54.62,46.75 36.00,57.50 17.38,46.75 17.38,25.25" fill="none" stroke="#5fe07e" stroke-width="1.8" stroke-dasharray="9 12.5" stroke-dashoffset="-6"/><rect x="32.5" y="11.0" width="7" height="7" fill="none" stroke="#5fe07e" stroke-width="1.8"/><rect x="51.11954618136543" y="21.75" width="7" height="7" fill="none" stroke="#5fe07e" stroke-width="1.8"/><rect x="51.119546181365436" y="43.24999999999999" width="7" height="7" fill="none" stroke="#5fe07e" stroke-width="1.8"/><rect x="32.5" y="54.0" width="7" height="7" fill="none" stroke="#5fe07e" stroke-width="1.8"/><rect x="13.880453818634575" y="43.25000000000001" width="7" height="7" fill="none" stroke="#5fe07e" stroke-width="1.8"/><rect x="13.88045381863456" y="21.750000000000014" width="7" height="7" fill="none" stroke="#5fe07e" stroke-width="1.8"/><polygon points="70,60 70,70 60,70" fill="#8a8a8a"/></svg>
<div class="a " style="left:2452px;top:579px;width:68px;height:2px;background:#303030;"></div>
<svg class="a" style="left:2450px;top:580px;" width="72" height="72" viewBox="0 0 72 72"><polygon points="36.00,13.00 45.53,18.50 36.00,24.00 26.47,18.50" fill="#6ee88c"/><polygon points="36.00,24.00 45.53,18.50 45.53,29.50 36.00,35.00" fill="#4cc06a"/><polygon points="36.00,24.00 36.00,35.00 26.47,29.50 26.47,18.50" fill="#3c9c56"/><polygon points="26.00,31.00 35.53,36.50 26.00,42.00 16.47,36.50" fill="#6ee88c"/><polygon points="26.00,42.00 35.53,36.50 35.53,47.50 26.00,53.00" fill="#4cc06a"/><polygon points="26.00,42.00 26.00,53.00 16.47,47.50 16.47,36.50" fill="#3c9c56"/><polygon points="46.00,31.00 55.53,36.50 46.00,42.00 36.47,36.50" fill="#6ee88c"/><polygon points="46.00,42.00 55.53,36.50 55.53,47.50 46.00,53.00" fill="#4cc06a"/><polygon points="46.00,42.00 46.00,53.00 36.47,47.50 36.47,36.50" fill="#3c9c56"/><polygon points="70,60 70,70 60,70" fill="#8a8a8a"/></svg>
<div class="a " style="left:2452px;top:651px;width:68px;height:2px;background:#303030;"></div>
<svg class="a" style="left:2450px;top:652px;" width="72" height="72" viewBox="0 0 72 72"><path d="M32.62 26.06 L32.80 21.86 L39.20 21.86 L39.38 26.06 L42.92 28.11 L46.65 26.16 L49.85 31.70 L46.30 33.95 L46.30 38.05 L49.85 40.30 L46.65 45.84 L42.92 43.89 L39.38 45.94 L39.20 50.14 L32.80 50.14 L32.62 45.94 L29.08 43.89 L25.35 45.84 L22.15 40.30 L25.70 38.05 L25.70 33.95 L22.15 31.70 L25.35 26.16 L29.08 28.11 Z M30.80 36.00 a5.2 5.2 0 1 0 10.4 0 a5.2 5.2 0 1 0 -10.4 0 Z" fill="#fff" fill-rule="evenodd" stroke="#fff" stroke-width="1.4" stroke-linejoin="round"/><circle cx="36.0" cy="15.0" r="4.6" fill="#5fe07e"/><circle cx="54.2" cy="25.5" r="4.6" fill="#5fe07e"/><circle cx="54.2" cy="46.5" r="4.6" fill="#5fe07e"/><circle cx="36.0" cy="57.0" r="4.6" fill="#5fe07e"/><circle cx="17.8" cy="46.5" r="4.6" fill="#5fe07e"/><circle cx="17.8" cy="25.5" r="4.6" fill="#5fe07e"/><circle cx="36" cy="36" r="4.4" fill="none" stroke="#5fe07e" stroke-width="2"/><polygon points="70,60 70,70 60,70" fill="#8a8a8a"/></svg>
<div class="a " style="left:2450px;top:732px;width:72px;height:144px;background:#3b3b3b;border-radius:8px;"></div>
<svg class="a" style="left:2450px;top:732px;" width="72" height="72" viewBox="0 0 72 72"><path d="M22 17 L42 11 C54 16 58 30 56 46 L43 56 L30 50 C24 42 16 32 22 17 Z" fill="none" stroke="#8f8df2" stroke-width="4" stroke-linecap="butt" stroke-linejoin="miter" /><path d="M28 26 C38 28 44 38 44 50" fill="none" stroke="#8f8df2" stroke-width="3" stroke-linecap="butt" stroke-linejoin="miter" /><polygon points="70,60 70,70 60,70" fill="#8a8a8a"/></svg>
<div class="a " style="left:2452px;top:803px;width:68px;height:2px;background:#303030;"></div>
<svg class="a" style="left:2450px;top:804px;" width="72" height="72" viewBox="0 0 72 72"><path d="M20 22 V54 H54 M13 30 L20 22 L27 30 M46 47 L54 54 L46 61" fill="none" stroke="#8f8df2" stroke-width="4" stroke-linecap="butt" stroke-linejoin="miter" /><polygon points="47.00,11.00 56.53,16.50 56.53,27.50 47.00,33.00 37.47,27.50 37.47,16.50" fill="none" stroke="#8f8df2" stroke-width="2"/><path d="M47 22 L56.5 16.5 M47 22 L37.5 16.5 M47 22 V33" stroke="#8f8df2" stroke-width="2"/><polygon points="70,60 70,70 60,70" fill="#8a8a8a"/></svg>
<div class="a " style="left:2450px;top:884px;width:72px;height:72px;background:#3b3b3b;border-radius:8px;"></div>
<svg class="a" style="left:2450px;top:884px;" width="72" height="72" viewBox="0 0 72 72"><path d="M18 27 L34 36.500 V56 L18 47 Z M38 16 L54 24.500 V45.500 L38 36.200 Z" fill="none" stroke="#f4a6ea" stroke-width="4" stroke-linecap="butt" stroke-linejoin="miter" /><path d="M26.300 42.100 L45.700 29.900" fill="none" stroke="#f4a6ea" stroke-width="3.4" stroke-linecap="butt" stroke-linejoin="miter" /><polygon points="70,60 70,70 60,70" fill="#8a8a8a"/></svg>
<div class="a " style="left:2450px;top:976px;width:72px;height:216px;background:#3b3b3b;border-radius:8px;"></div>
<svg class="a" style="left:2450px;top:976px;" width="72" height="72" viewBox="0 0 72 72"><polygon points="36.00,11.40 43.65,16.52 52.69,18.31 54.48,27.35 59.60,35.00 54.48,42.65 52.69,51.69 43.65,53.48 36.00,58.60 28.35,53.48 19.31,51.69 17.52,42.65 12.40,35.00 17.52,27.35 19.31,18.31 28.35,16.52" fill="#c3caf8" stroke="#c3caf8" stroke-width="2.500" stroke-linejoin="round"/><circle cx="35.500" cy="36" r="14.500" fill="#3b3b3b"/><circle cx="45" cy="29" r="10.500" fill="#c3caf8"/><polygon points="70,60 70,70 60,70" fill="#8a8a8a"/></svg>
<div class="a " style="left:2452px;top:1047px;width:68px;height:2px;background:#303030;"></div>
<svg class="a" style="left:2450px;top:1048px;" width="72" height="72" viewBox="0 0 72 72"><rect x="14" y="30" width="30" height="24" rx="4" fill="none" stroke="#c3caf8" stroke-width="4" stroke-linecap="butt" stroke-linejoin="miter" /><path d="M20 30 V20 H34 a5 5 0 0 1 5 5 V30" fill="none" stroke="#c3caf8" stroke-width="4" stroke-linecap="butt" stroke-linejoin="miter" /><polygon points="48,42 60,32 60,52" fill="#c3caf8"/><polygon points="70,60 70,70 60,70" fill="#8a8a8a"/></svg>
<div class="a " style="left:2452px;top:1119px;width:68px;height:2px;background:#303030;"></div>
<svg class="a" style="left:2450px;top:1120px;" width="72" height="72" viewBox="0 0 72 72"><path d="M18 16 H54 L50 44 H22 Z" fill="none" stroke="#c3caf8" stroke-width="3.4" stroke-linecap="butt" stroke-linejoin="miter" /><path d="M36 26 V58 M28 50 L36 58 L44 50" fill="none" stroke="#c3caf8" stroke-width="3.4" stroke-linecap="butt" stroke-linejoin="miter" /><polygon points="70,60 70,70 60,70" fill="#8a8a8a"/></svg>
<div class="a " style="left:2450px;top:1232px;width:72px;height:72px;background:#3b3b3b;border-radius:8px;"></div>
<svg class="a" style="left:2450px;top:1232px;" width="72" height="72" viewBox="0 0 72 72"><path d="M46 20 L34.0 14.0 L13.2 26.0 L13.2 50.0 L34.0 62.0 L54.8 50.0 V36" fill="none" stroke="#8c8c8c" stroke-width="2.6" stroke-linecap="butt" stroke-linejoin="miter" /><path d="M25 47 L28 38 L46 20 L52 26 L34 44 Z" fill="#fff"/><path d="M49 17 L55 23" stroke="#fff" stroke-width="5" stroke-linecap="round"/><polygon points="70,60 70,70 60,70" fill="#8a8a8a"/></svg>
<div class="a " style="left:2526px;top:112px;width:930px;height:12px;background:#2b2b2b;"></div>
<div class="a " style="left:2526px;top:124px;width:930px;height:44px;background:#1c1c1c;"></div>
<div class="a " style="left:2526px;top:126px;width:128px;height:42px;background:#2b2b2b;border-radius:7px 7px 0 0;"></div>
<div class="a t" style="left:2548.00px;top:130.85px;font-size:22px;line-height:30.80px;color:#e8e8e8;letter-spacing:0.987px;">Objects</div>
<div class="a " style="left:2526px;top:168px;width:930px;height:44px;background:#2b2b2b;"></div>
<div class="a " style="left:2526px;top:212px;width:930px;height:4px;background:#202020;"></div>
<svg class="a" style="left:2538px;top:178px;" width="28" height="22" viewBox="0 0 28 22"><path d="M0 3 H28 M0 11 H28 M0 19 H28" fill="none" stroke="#b4b4b4" stroke-width="3.6" stroke-linecap="butt" stroke-linejoin="miter" /></svg>
<div class="a t" style="left:2586.70px;top:172.85px;font-size:22px;line-height:30.80px;color:#b4b4b4;letter-spacing:-0.382px;">File</div>
<div class="a t" style="left:2652.60px;top:172.85px;font-size:22px;line-height:30.80px;color:#b4b4b4;letter-spacing:0.464px;">Edit</div>
<div class="a t" style="left:2722.00px;top:172.85px;font-size:22px;line-height:30.80px;color:#b4b4b4;letter-spacing:0.738px;">View</div>
<div class="a t" style="left:2802.00px;top:172.85px;font-size:22px;line-height:30.80px;color:#b4b4b4;letter-spacing:1.084px;">Object</div>
<div class="a t" style="left:2900.00px;top:172.85px;font-size:22px;line-height:30.80px;color:#b4b4b4;letter-spacing:0.711px;">Tags</div>
<div class="a t" style="left:2978.00px;top:172.85px;font-size:22px;line-height:30.80px;color:#b4b4b4;letter-spacing:0.672px;">Bookmarks</div>
<svg class="a" style="left:3300px;top:174px;" width="31" height="31" viewBox="0 0 32 32"><circle cx="13" cy="13" r="9" fill="none" stroke="#b2b2b2" stroke-width="2.8" stroke-linecap="butt" stroke-linejoin="miter" /><path d="M19.5 19.5 L30 30" fill="none" stroke="#b2b2b2" stroke-width="3" stroke-linecap="butt" stroke-linejoin="miter" /></svg>
<svg class="a" style="left:3340px;top:175px;" width="28" height="28" viewBox="0 0 30 30"><path d="M3 14 L15 3 L27 14 M6 12 V27 H12 V18 H18 V27 H24 V12" fill="none" stroke="#b2b2b2" stroke-width="2.8" stroke-linecap="butt" stroke-linejoin="miter" /></svg>
<svg class="a" style="left:3378px;top:176px;" width="30" height="28" viewBox="0 0 32 30"><path d="M1 6 H31 M7 15 H25 M12 24 H20" fill="none" stroke="#b2b2b2" stroke-width="3.4" stroke-linecap="butt" stroke-linejoin="miter" /></svg>
<svg class="a" style="left:3420px;top:175px;" width="28" height="28" viewBox="0 0 30 30"><path d="M13 3 H5 a2 2 0 0 0 -2 2 V25 a2 2 0 0 0 2 2 H25 a2 2 0 0 0 2 -2 V17" fill="none" stroke="#b2b2b2" stroke-width="2.8" stroke-linecap="butt" stroke-linejoin="miter" /><path d="M12 18 L27 3 M17 2.500 H27.500 V13" fill="none" stroke="#b2b2b2" stroke-width="2.8" stroke-linecap="butt" stroke-linejoin="miter" /></svg>
<div class="a " style="left:2526px;top:216px;width:348px;height:656px;background:#292929;"></div>
<div class="a " style="left:2874px;top:216px;width:582px;height:656px;background:#2b2b2b;"></div>
<div class="a " style="left:2872.5px;top:216px;width:2px;height:656px;background:#222;"></div>
<div class="a " style="left:2526px;top:216px;width:346.5px;height:40px;background:#1f1f1f;"></div>
<div class="a " style="left:2874.5px;top:216px;width:581.5px;height:40px;background:#262626;"></div>
<div class="a " style="left:2542px;top:216px;width:2px;height:40px;background:#5a5a5a;"></div>
<div class="a " style="left:2544px;top:236px;width:15px;height:2px;background:#5a5a5a;"></div>
<svg class="a" style="left:2561px;top:222px;" width="28" height="28" viewBox="0 0 28 28"><path d="M3 8 L10 2 L16 9 L10 15 Z" fill="none" stroke="#e8e8e8" stroke-width="2"/><path d="M10 15 V20 M14 11 L25 23 M25 16 V23 H18" fill="none" stroke="#e8e8e8" stroke-width="2"/></svg>
<div class="a t" style="left:2599.00px;top:220.85px;font-size:22px;line-height:30.80px;color:#fdc834;letter-spacing:0.471px;-webkit-text-stroke:0.7px currentColor;">RS Spot Light</div>
<svg class="a" style="left:2786px;top:226px;" width="20" height="20" viewBox="0 0 20 20"><rect width="20" height="20" rx="4" fill="#494949"/><path d="M5 15 L15 5" stroke="#1f1f1f" stroke-width="3.2"/></svg>
<div class="a " style="left:2818px;top:221px;width:12px;height:12px;background:#4e4e4e;border-radius:6px;"></div>
<div class="a " style="left:2818px;top:238px;width:12px;height:12px;background:#4e4e4e;border-radius:6px;"></div>
<svg class="a" style="left:2838.5px;top:226px;" width="24" height="20" viewBox="0 0 24 20"><path d="M1.500 10.500 L8.500 17.500 L22.500 2.500" fill="none" stroke="#5de37a" stroke-width="3.4"/></svg>
<div class="a " style="left:2542px;top:256px;width:2px;height:40px;background:#5a5a5a;"></div>
<div class="a " style="left:2544px;top:276px;width:15px;height:2px;background:#5a5a5a;"></div>
<svg class="a" style="left:2561px;top:262px;" width="28" height="28" viewBox="0 0 28 28"><circle cx="13" cy="13" r="5.2" fill="none" stroke="#e8e8e8" stroke-width="2"/><path d="M13 1 V4.5 M13 21.5 V25 M1 13 H4.5 M4.5 4.500 L7 7 M21.5 4.500 L19 7 M4.5 21.500 L7 19 M21.5 13 H25" stroke="#e8e8e8" stroke-width="2"/><path d="M19 19 L25 25 M25 20 V25 H20" fill="none" stroke="#e8e8e8" stroke-width="1.8"/></svg>
<div class="a t" style="left:2599.00px;top:260.85px;font-size:22px;line-height:30.80px;color:#c0c0c0;letter-spacing:0.544px;">RS Infinite Light</div>
<svg class="a" style="left:2786px;top:266px;" width="20" height="20" viewBox="0 0 20 20"><rect width="20" height="20" rx="4" fill="#494949"/><path d="M5 15 L15 5" stroke="#1f1f1f" stroke-width="3.2"/></svg>
<div class="a " style="left:2818px;top:261px;width:12px;height:12px;background:#4e4e4e;border-radius:6px;"></div>
<div class="a " style="left:2818px;top:278px;width:12px;height:12px;background:#4e4e4e;border-radius:6px;"></div>
<svg class="a" style="left:2838.5px;top:266px;" width="24" height="20" viewBox="0 0 24 20"><path d="M1.500 10.500 L8.500 17.500 L22.500 2.500" fill="none" stroke="#5de37a" stroke-width="3.4"/></svg>
<div class="a " style="left:2526px;top:296px;width:346.5px;height:40px;background:#1f1f1f;"></div>
<div class="a " style="left:2874.5px;top:296px;width:581.5px;height:40px;background:#262626;"></div>
<div class="a " style="left:2542px;top:296px;width:2px;height:40px;background:#5a5a5a;"></div>
<div class="a " style="left:2544px;top:316px;width:15px;height:2px;background:#5a5a5a;"></div>
<svg class="a" style="left:2561px;top:302px;" width="28" height="28" viewBox="0 0 28 28"><polygon points="14,6 27,14 14,22 1,14" fill="#86d6f8"/><path d="M7.500 10 L20.500 18 M20.500 10 L7.500 18" stroke="#262626" stroke-width="1.6"/></svg>
<div class="a t" style="left:2599.00px;top:300.85px;font-size:22px;line-height:30.80px;color:#c0c0c0;letter-spacing:0.059px;">Plane</div>
<svg class="a" style="left:2786px;top:306px;" width="20" height="20" viewBox="0 0 20 20"><rect width="20" height="20" rx="4" fill="#494949"/><path d="M5 15 L15 5" stroke="#1f1f1f" stroke-width="3.2"/></svg>
<div class="a " style="left:2818px;top:301px;width:12px;height:12px;background:#4e4e4e;border-radius:6px;"></div>
<div class="a " style="left:2818px;top:318px;width:12px;height:12px;background:#4e4e4e;border-radius:6px;"></div>
<svg class="a" style="left:2838.5px;top:306px;" width="24" height="20" viewBox="0 0 24 20"><path d="M1.500 10.500 L8.500 17.500 L22.500 2.500" fill="none" stroke="#5de37a" stroke-width="3.4"/></svg>
<svg class="a" style="left:2880px;top:303px;" width="26" height="26" viewBox="0 0 26 26"><path d="M2 25 V3 H25 M2 18 C14 18 19 11 19 3" fill="none" stroke="#8f8df2" stroke-width="2"/></svg>
<div class="a " style="left:2542px;top:336px;width:2px;height:40px;background:#5a5a5a;"></div>
<div class="a " style="left:2544px;top:356px;width:15px;height:2px;background:#5a5a5a;"></div>
<svg class="a" style="left:2534px;top:348px;" width="18" height="18" viewBox="0 0 18 18"><rect x="1" y="1" width="16" height="16" fill="#262626" stroke="#7a7a7a" stroke-width="1.6"/><path d="M4.500 9 H13.500 M9 4.500 V13.500" stroke="#8a8a8a" stroke-width="1.8"/></svg>
<svg class="a" style="left:2561px;top:342px;" width="28" height="28" viewBox="0 0 28 28"><path d="M5 4 V23 H25 M1.500 8 L5 4 L8.500 8 M21 19.500 L25 23 L21 26.500" fill="none" stroke="#c3caf8" stroke-width="2"/><circle cx="17" cy="9" r="6" fill="#c3caf8"/></svg>
<div class="a t" style="left:2599.00px;top:340.85px;font-size:22px;line-height:30.80px;color:#c0c0c0;letter-spacing:0.169px;">Group.7</div>
<svg class="a" style="left:2786px;top:346px;" width="20" height="20" viewBox="0 0 20 20"><rect width="20" height="20" rx="4" fill="#494949"/><path d="M5 15 L15 5" stroke="#1f1f1f" stroke-width="3.2"/></svg>
<div class="a " style="left:2818px;top:341px;width:12px;height:12px;background:#4e4e4e;border-radius:6px;"></div>
<div class="a " style="left:2818px;top:358px;width:12px;height:12px;background:#4e4e4e;border-radius:6px;"></div>
<svg class="a" style="left:2876px;top:338px;overflow:hidden" width="36" height="36" viewBox="0 0 120 120"><use href="#th_rattan"/></svg>
<div class="a " style="left:2526px;top:376px;width:346.5px;height:40px;background:#1f1f1f;"></div>
<div class="a " style="left:2874.5px;top:376px;width:581.5px;height:40px;background:#262626;"></div>
<div class="a " style="left:2542px;top:376px;width:2px;height:40px;background:#5a5a5a;"></div>
<div class="a " style="left:2544px;top:396px;width:15px;height:2px;background:#5a5a5a;"></div>
<svg class="a" style="left:2534px;top:388px;" width="18" height="18" viewBox="0 0 18 18"><rect x="1" y="1" width="16" height="16" fill="#262626" stroke="#7a7a7a" stroke-width="1.6"/><path d="M4.500 9 H13.500 M9 4.500 V13.500" stroke="#8a8a8a" stroke-width="1.8"/></svg>
<svg class="a" style="left:2561px;top:382px;" width="28" height="28" viewBox="0 0 28 28"><path d="M5 4 V23 H25 M1.500 8 L5 4 L8.500 8 M21 19.500 L25 23 L21 26.500" fill="none" stroke="#c3caf8" stroke-width="2"/><circle cx="17" cy="9" r="6" fill="#c3caf8"/></svg>
<div class="a t" style="left:2599.00px;top:380.85px;font-size:22px;line-height:30.80px;color:#c0c0c0;letter-spacing:0.340px;">Group</div>
<svg class="a" style="left:2786px;top:386px;" width="20" height="20" viewBox="0 0 20 20"><rect width="20" height="20" rx="4" fill="#494949"/><path d="M5 15 L15 5" stroke="#1f1f1f" stroke-width="3.2"/></svg>
<div class="a " style="left:2818px;top:381px;width:12px;height:12px;background:#4e4e4e;border-radius:6px;"></div>
<div class="a " style="left:2818px;top:398px;width:12px;height:12px;background:#4e4e4e;border-radius:6px;"></div>
<svg class="a" style="left:2876px;top:378px;overflow:hidden" width="36" height="36" viewBox="0 0 120 120"><use href="#th_rattan"/></svg>
<div class="a " style="left:2542px;top:416px;width:2px;height:40px;background:#5a5a5a;"></div>
<div class="a " style="left:2544px;top:436px;width:15px;height:2px;background:#5a5a5a;"></div>
<svg class="a" style="left:2561px;top:422px;" width="28" height="28" viewBox="0 0 28 28"><ellipse cx="14" cy="14" rx="12.5" ry="8.500" fill="#86d6f8"/><ellipse cx="14" cy="12.500" rx="6.500" ry="3" fill="#262626"/></svg>
<div class="a t" style="left:2599.00px;top:420.85px;font-size:22px;line-height:30.80px;color:#c0c0c0;letter-spacing:0.560px;">Torus.2</div>
<svg class="a" style="left:2786px;top:426px;" width="20" height="20" viewBox="0 0 20 20"><rect width="20" height="20" rx="4" fill="#494949"/><path d="M5 15 L15 5" stroke="#1f1f1f" stroke-width="3.2"/></svg>
<div class="a " style="left:2818px;top:421px;width:12px;height:12px;background:#4e4e4e;border-radius:6px;"></div>
<div class="a " style="left:2818px;top:438px;width:12px;height:12px;background:#4e4e4e;border-radius:6px;"></div>
<svg class="a" style="left:2838.5px;top:426px;" width="24" height="20" viewBox="0 0 24 20"><path d="M1.500 10.500 L8.500 17.500 L22.500 2.500" fill="none" stroke="#5de37a" stroke-width="3.4"/></svg>
<svg class="a" style="left:2880px;top:423px;" width="26" height="26" viewBox="0 0 26 26"><path d="M2 25 V3 H25 M2 18 C14 18 19 11 19 3" fill="none" stroke="#8f8df2" stroke-width="2"/></svg>
<svg class="a" style="left:2916px;top:418px;overflow:hidden" width="36" height="36" viewBox="0 0 120 120"><use href="#th_rattan"/></svg>
<div class="a " style="left:2526px;top:456px;width:346.5px;height:40px;background:#1f1f1f;"></div>
<div class="a " style="left:2874.5px;top:456px;width:581.5px;height:40px;background:#262626;"></div>
<div class="a " style="left:2542px;top:456px;width:2px;height:40px;background:#5a5a5a;"></div>
<div class="a " style="left:2544px;top:476px;width:15px;height:2px;background:#5a5a5a;"></div>
<svg class="a" style="left:2561px;top:462px;" width="28" height="28" viewBox="0 0 28 28"><ellipse cx="14" cy="14" rx="12.5" ry="8.500" fill="#86d6f8"/><ellipse cx="14" cy="12.500" rx="6.500" ry="3" fill="#262626"/></svg>
<div class="a t" style="left:2599.00px;top:460.85px;font-size:22px;line-height:30.80px;color:#c0c0c0;letter-spacing:-0.023px;">Torus.1</div>
<svg class="a" style="left:2786px;top:466px;" width="20" height="20" viewBox="0 0 20 20"><rect width="20" height="20" rx="4" fill="#494949"/><path d="M5 15 L15 5" stroke="#1f1f1f" stroke-width="3.2"/></svg>
<div class="a " style="left:2818px;top:461px;width:12px;height:12px;background:#4e4e4e;border-radius:6px;"></div>
<div class="a " style="left:2818px;top:478px;width:12px;height:12px;background:#4e4e4e;border-radius:6px;"></div>
<svg class="a" style="left:2838.5px;top:466px;" width="24" height="20" viewBox="0 0 24 20"><path d="M1.500 10.500 L8.500 17.500 L22.500 2.500" fill="none" stroke="#5de37a" stroke-width="3.4"/></svg>
<svg class="a" style="left:2880px;top:463px;" width="26" height="26" viewBox="0 0 26 26"><path d="M2 25 V3 H25 M2 18 C14 18 19 11 19 3" fill="none" stroke="#8f8df2" stroke-width="2"/></svg>
<svg class="a" style="left:2916px;top:458px;overflow:hidden" width="36" height="36" viewBox="0 0 120 120"><use href="#th_rattan"/></svg>
<div class="a " style="left:2542px;top:496px;width:2px;height:40px;background:#5a5a5a;"></div>
<div class="a " style="left:2544px;top:516px;width:15px;height:2px;background:#5a5a5a;"></div>
<svg class="a" style="left:2534px;top:508px;" width="18" height="18" viewBox="0 0 18 18"><rect x="1" y="1" width="16" height="16" fill="#262626" stroke="#7a7a7a" stroke-width="1.6"/><path d="M4.500 9 H13.500 M9 4.500 V13.500" stroke="#8a8a8a" stroke-width="1.8"/></svg>
<svg class="a" style="left:2561px;top:502px;" width="28" height="28" viewBox="0 0 28 28"><path d="M12.26 8.89 L12.34 6.68 L15.66 6.68 L15.74 8.89 L17.56 9.94 L19.51 8.91 L21.16 11.78 L19.30 12.95 L19.30 15.05 L21.16 16.22 L19.51 19.09 L17.56 18.06 L15.74 19.11 L15.66 21.32 L12.34 21.32 L12.26 19.11 L10.44 18.06 L8.49 19.09 L6.84 16.22 L8.70 15.05 L8.70 12.95 L6.84 11.78 L8.49 8.91 L10.44 9.94 Z M11.40 14.00 a2.6 2.6 0 1 0 5.2 0 a2.6 2.6 0 1 0 -5.2 0 Z" fill="#fff" fill-rule="evenodd" stroke="#fff" stroke-width="1.4" stroke-linejoin="round"/><circle cx="14.0" cy="3.0" r="2.4" fill="#5fe07e"/><circle cx="23.5" cy="8.5" r="2.4" fill="#5fe07e"/><circle cx="23.5" cy="19.5" r="2.4" fill="#5fe07e"/><circle cx="14.0" cy="25.0" r="2.4" fill="#5fe07e"/><circle cx="4.5" cy="19.5" r="2.4" fill="#5fe07e"/><circle cx="4.5" cy="8.5" r="2.4" fill="#5fe07e"/></svg>
<div class="a t" style="left:2599.00px;top:500.85px;font-size:22px;line-height:30.80px;color:#c0c0c0;letter-spacing:0.339px;">Cloner</div>
<svg class="a" style="left:2786px;top:506px;" width="20" height="20" viewBox="0 0 20 20"><rect width="20" height="20" rx="4" fill="#494949"/><path d="M5 15 L15 5" stroke="#1f1f1f" stroke-width="3.2"/></svg>
<div class="a " style="left:2818px;top:501px;width:12px;height:12px;background:#4e4e4e;border-radius:6px;"></div>
<div class="a " style="left:2818px;top:518px;width:12px;height:12px;background:#4e4e4e;border-radius:6px;"></div>
<svg class="a" style="left:2838.5px;top:506px;" width="24" height="20" viewBox="0 0 24 20"><path d="M1.500 10.500 L8.500 17.500 L22.500 2.500" fill="none" stroke="#5de37a" stroke-width="3.4"/></svg>
<svg class="a" style="left:2876px;top:498px;overflow:hidden" width="36" height="36" viewBox="0 0 120 120"><use href="#th_rattan"/></svg>
<div class="a " style="left:2526px;top:536px;width:346.5px;height:40px;background:#1f1f1f;"></div>
<div class="a " style="left:2874.5px;top:536px;width:581.5px;height:40px;background:#262626;"></div>
<div class="a " style="left:2542px;top:536px;width:2px;height:40px;background:#5a5a5a;"></div>
<div class="a " style="left:2544px;top:556px;width:15px;height:2px;background:#5a5a5a;"></div>
<svg class="a" style="left:2561px;top:542px;" width="28" height="28" viewBox="0 0 28 28"><ellipse cx="14" cy="14" rx="12.5" ry="8.500" fill="#86d6f8"/><ellipse cx="14" cy="12.500" rx="6.500" ry="3" fill="#262626"/></svg>
<div class="a t" style="left:2599.00px;top:540.85px;font-size:22px;line-height:30.80px;color:#c0c0c0;letter-spacing:0.677px;">Torus</div>
<svg class="a" style="left:2786px;top:546px;" width="20" height="20" viewBox="0 0 20 20"><rect width="20" height="20" rx="4" fill="#494949"/><path d="M5 15 L15 5" stroke="#1f1f1f" stroke-width="3.2"/></svg>
<div class="a " style="left:2818px;top:541px;width:12px;height:12px;background:#4e4e4e;border-radius:6px;"></div>
<div class="a " style="left:2818px;top:558px;width:12px;height:12px;background:#4e4e4e;border-radius:6px;"></div>
<svg class="a" style="left:2838.5px;top:546px;" width="24" height="20" viewBox="0 0 24 20"><path d="M1.500 10.500 L8.500 17.500 L22.500 2.500" fill="none" stroke="#5de37a" stroke-width="3.4"/></svg>
<svg class="a" style="left:2880px;top:543px;" width="26" height="26" viewBox="0 0 26 26"><path d="M2 25 V3 H25 M2 18 C14 18 19 11 19 3" fill="none" stroke="#8f8df2" stroke-width="2"/></svg>
<svg class="a" style="left:2916px;top:538px;overflow:hidden" width="36" height="36" viewBox="0 0 120 120"><use href="#th_rattan"/></svg>
<div class="a " style="left:2542px;top:576px;width:2px;height:40px;background:#5a5a5a;"></div>
<div class="a " style="left:2544px;top:596px;width:15px;height:2px;background:#5a5a5a;"></div>
<svg class="a" style="left:2534px;top:588px;" width="18" height="18" viewBox="0 0 18 18"><rect x="1" y="1" width="16" height="16" fill="#262626" stroke="#7a7a7a" stroke-width="1.6"/><path d="M4.500 9 H13.500 M9 4.500 V13.500" stroke="#8a8a8a" stroke-width="1.8"/></svg>
<svg class="a" style="left:2561px;top:582px;" width="28" height="28" viewBox="0 0 28 28"><path d="M13 1 C13 9 10 13 3 16 C1 19 6 22 13 22 C20 22 26 19 24 16 C17 13 14 9 13 1 Z" fill="#5fe07e"/><path d="M13 22 V27" stroke="#5fe07e" stroke-width="2"/><ellipse cx="13" cy="19" rx="4" ry="1.3" fill="#fff" opacity="0.8"/></svg>
<div class="a t" style="left:2599.00px;top:580.85px;font-size:22px;line-height:30.80px;color:#c0c0c0;letter-spacing:-0.149px;">Lathe.1</div>
<svg class="a" style="left:2786px;top:586px;" width="20" height="20" viewBox="0 0 20 20"><rect width="20" height="20" rx="4" fill="#494949"/><path d="M5 15 L15 5" stroke="#1f1f1f" stroke-width="3.2"/></svg>
<div class="a " style="left:2818px;top:581px;width:12px;height:12px;background:#4e4e4e;border-radius:6px;"></div>
<div class="a " style="left:2818px;top:598px;width:12px;height:12px;background:#4e4e4e;border-radius:6px;"></div>
<svg class="a" style="left:2838.5px;top:586px;" width="24" height="20" viewBox="0 0 24 20"><path d="M1.500 10.500 L8.500 17.500 L22.500 2.500" fill="none" stroke="#5de37a" stroke-width="3.4"/></svg>
<svg class="a" style="left:2880px;top:583px;" width="26" height="26" viewBox="0 0 26 26"><path d="M2 25 V3 H25 M2 18 C14 18 19 11 19 3" fill="none" stroke="#8f8df2" stroke-width="2"/></svg>
<svg class="a" style="left:2916px;top:578px;overflow:hidden" width="36" height="36" viewBox="0 0 120 120"><use href="#th_q"/></svg>
<div class="a t" style="left:2925.38px;top:575.66px;font-size:31px;line-height:43.40px;color:#e4e4e4;letter-spacing:0.000px;">?</div>
<div class="a " style="left:2526px;top:616px;width:346.5px;height:40px;background:#1f1f1f;"></div>
<div class="a " style="left:2874.5px;top:616px;width:581.5px;height:40px;background:#262626;"></div>
<div class="a " style="left:2542px;top:616px;width:2px;height:20px;background:#5a5a5a;"></div>
<div class="a " style="left:2544px;top:636px;width:15px;height:2px;background:#5a5a5a;"></div>
<svg class="a" style="left:2534px;top:628px;" width="18" height="18" viewBox="0 0 18 18"><rect x="1" y="1" width="16" height="16" fill="#262626" stroke="#7a7a7a" stroke-width="1.6"/><path d="M4.500 9 H13.500" stroke="#8a8a8a" stroke-width="1.8"/></svg>
<svg class="a" style="left:2561px;top:622px;" width="28" height="28" viewBox="0 0 28 28"><path d="M13 1 C13 9 10 13 3 16 C1 19 6 22 13 22 C20 22 26 19 24 16 C17 13 14 9 13 1 Z" fill="#5fe07e"/><path d="M13 22 V27" stroke="#5fe07e" stroke-width="2"/><ellipse cx="13" cy="19" rx="4" ry="1.3" fill="#fff" opacity="0.8"/></svg>
<div class="a t" style="left:2599.00px;top:620.85px;font-size:22px;line-height:30.80px;color:#c0c0c0;letter-spacing:0.488px;">Lathe</div>
<svg class="a" style="left:2786px;top:626px;" width="20" height="20" viewBox="0 0 20 20"><rect width="20" height="20" rx="4" fill="#494949"/><path d="M5 15 L15 5" stroke="#1f1f1f" stroke-width="3.2"/></svg>
<div class="a " style="left:2818px;top:621px;width:12px;height:12px;background:#4e4e4e;border-radius:6px;"></div>
<div class="a " style="left:2818px;top:638px;width:12px;height:12px;background:#4e4e4e;border-radius:6px;"></div>
<svg class="a" style="left:2838.5px;top:626px;" width="24" height="20" viewBox="0 0 24 20"><path d="M1.500 10.500 L8.500 17.500 L22.500 2.500" fill="none" stroke="#5de37a" stroke-width="3.4"/></svg>
<svg class="a" style="left:2880px;top:623px;" width="26" height="26" viewBox="0 0 26 26"><path d="M2 25 V3 H25 M2 18 C14 18 19 11 19 3" fill="none" stroke="#8f8df2" stroke-width="2"/></svg>
<svg class="a" style="left:2916px;top:618px;overflow:hidden" width="36" height="36" viewBox="0 0 120 120"><use href="#th_q"/></svg>
<div class="a t" style="left:2925.38px;top:615.66px;font-size:31px;line-height:43.40px;color:#e4e4e4;letter-spacing:0.000px;">?</div>
<svg class="a" style="left:2956px;top:618px;overflow:hidden" width="36" height="36" viewBox="0 0 120 120"><use href="#th_larch"/></svg>
<div class="a " style="left:2566px;top:656px;width:2px;height:22px;background:#5a5a5a;"></div>
<div class="a " style="left:2566px;top:677px;width:18px;height:2px;background:#5a5a5a;"></div>
<svg class="a" style="left:2585px;top:662px;" width="28" height="28" viewBox="0 0 28 28"><path d="M6 8 C22 6 24 14 14 15 C4 16 6 23 22 23" fill="none" stroke="#86d6f8" stroke-width="2"/><circle cx="14" cy="3" r="2.2" fill="#86d6f8"/><circle cx="12" cy="26" r="2.2" fill="#86d6f8"/></svg>
<div class="a t" style="left:2623.00px;top:660.85px;font-size:22px;line-height:30.80px;color:#c0c0c0;letter-spacing:0.369px;">Spline</div>
<svg class="a" style="left:2786px;top:666px;" width="20" height="20" viewBox="0 0 20 20"><rect width="20" height="20" rx="4" fill="#494949"/><path d="M5 15 L15 5" stroke="#1f1f1f" stroke-width="3.2"/></svg>
<div class="a " style="left:2818px;top:661px;width:12px;height:12px;background:#4e4e4e;border-radius:6px;"></div>
<div class="a " style="left:2818px;top:678px;width:12px;height:12px;background:#4e4e4e;border-radius:6px;"></div>
<svg class="a" style="left:2838.5px;top:666px;" width="24" height="20" viewBox="0 0 24 20"><path d="M1.500 10.500 L8.500 17.500 L22.500 2.500" fill="none" stroke="#5de37a" stroke-width="3.4"/></svg>
<div class="a " style="left:2526px;top:872px;width:930px;height:16px;background:#2b2b2b;"></div>
<div class="a " style="left:2526px;top:884px;width:930px;height:4px;background:#1c1c1c;"></div>
<div class="a " style="left:2526px;top:888px;width:930px;height:34px;background:#1c1c1c;"></div>
<div class="a " style="left:2526px;top:872px;width:930px;height:8px;background:#2b2b2b;"></div>
<div class="a " style="left:2526px;top:878px;width:930px;height:4px;background:#1c1c1c;"></div>
<div class="a " style="left:2526px;top:880px;width:150px;height:42px;background:#2b2b2b;border-radius:7px 7px 0 0;"></div>
<div class="a t" style="left:2549.00px;top:884.35px;font-size:22px;line-height:30.80px;color:#f0f0f0;letter-spacing:1.053px;">Attributes</div>
<div class="a t" style="left:2702.80px;top:884.35px;font-size:22px;line-height:30.80px;color:#a4a4a4;letter-spacing:0.374px;">Layers</div>
<div class="a t" style="left:2823.30px;top:884.35px;font-size:22px;line-height:30.80px;color:#a4a4a4;letter-spacing:0.560px;">Axis Center</div>
<div class="a t" style="left:2995.00px;top:884.35px;font-size:22px;line-height:30.80px;color:#a4a4a4;letter-spacing:0.994px;">Structure</div>
<div class="a " style="left:2526px;top:922px;width:930px;height:890px;background:#2b2b2b;"></div>
<svg class="a" style="left:2538px;top:932px;" width="28" height="22" viewBox="0 0 28 22"><path d="M0 3 H28 M0 11 H28 M0 19 H28" fill="none" stroke="#b4b4b4" stroke-width="3.6" stroke-linecap="butt" stroke-linejoin="miter" /></svg>
<div class="a t" style="left:2586.70px;top:926.85px;font-size:22px;line-height:30.80px;color:#b4b4b4;letter-spacing:0.524px;">Mode</div>
<div class="a t" style="left:2674.90px;top:926.85px;font-size:22px;line-height:30.80px;color:#b4b4b4;letter-spacing:0.459px;">User Data</div>
<svg class="a" style="left:3140px;top:929px;" width="27" height="27" viewBox="0 0 30 30"><path d="M27 15 H4 M13 5 L3 15 L13 25" fill="none" stroke="#4e4e4e" stroke-width="3" stroke-linecap="butt" stroke-linejoin="miter" /></svg>
<svg class="a" style="left:3181px;top:929px;" width="27" height="27" viewBox="0 0 30 30"><path d="M3 15 H26 M17 5 L27 15 L17 25" fill="none" stroke="#4e4e4e" stroke-width="3" stroke-linecap="butt" stroke-linejoin="miter" /></svg>
<svg class="a" style="left:3220px;top:929px;" width="27" height="27" viewBox="0 0 30 30"><path d="M15 28 V4 M4 14 L15 3 L26 14" fill="none" stroke="#b8b8b8" stroke-width="3.2" stroke-linecap="butt" stroke-linejoin="miter" /></svg>
<svg class="a" style="left:3260px;top:928px;" width="30" height="30" viewBox="0 0 32 32"><circle cx="13" cy="13" r="9.500" fill="none" stroke="#f0f0f0" stroke-width="3" stroke-linecap="butt" stroke-linejoin="miter" /><path d="M19.500 19.500 L30 30" fill="none" stroke="#f0f0f0" stroke-width="3.4" stroke-linecap="butt" stroke-linejoin="miter" /></svg>
<svg class="a" style="left:3299px;top:930px;" width="30" height="28" viewBox="0 0 32 30"><path d="M1 6 H31 M7 15 H25 M12 24 H20" fill="none" stroke="#b2b2b2" stroke-width="3.4" stroke-linecap="butt" stroke-linejoin="miter" /></svg>
<svg class="a" style="left:3341px;top:926px;" width="27" height="30" viewBox="0 0 30 32"><rect x="4" y="13" width="22" height="17" rx="3" fill="none" stroke="#b2b2b2" stroke-width="2.8" stroke-linecap="butt" stroke-linejoin="miter" /><path d="M9 13 V9 a6 6 0 0 1 12 0 V13" fill="none" stroke="#b2b2b2" stroke-width="2.8" stroke-linecap="butt" stroke-linejoin="miter" /><circle cx="15" cy="21.500" r="2.6" fill="#b2b2b2"/></svg>
<svg class="a" style="left:3379px;top:928px;" width="30" height="30" viewBox="0 0 32 32"><circle cx="16" cy="16" r="13.500" fill="none" stroke="#b2b2b2" stroke-width="2.8" stroke-linecap="butt" stroke-linejoin="miter" /><circle cx="16" cy="16" r="5" fill="none" stroke="#b2b2b2" stroke-width="2.6" stroke-linecap="butt" stroke-linejoin="miter" /></svg>
<svg class="a" style="left:3420px;top:929px;" width="28" height="28" viewBox="0 0 30 30"><path d="M13 3 H5 a2 2 0 0 0 -2 2 V25 a2 2 0 0 0 2 2 H25 a2 2 0 0 0 2 -2 V17" fill="none" stroke="#b2b2b2" stroke-width="2.8" stroke-linecap="butt" stroke-linejoin="miter" /><path d="M12 18 L27 3 M17 2.500 H27.500 V13" fill="none" stroke="#b2b2b2" stroke-width="2.8" stroke-linecap="butt" stroke-linejoin="miter" /></svg>
<div class="a " style="left:2526px;top:965px;width:930px;height:2px;background:#222;"></div>
<div class="a " style="left:2536px;top:978px;width:908px;height:34px;background:#1a1a1a;border-radius:8px;"></div>
<div class="a t" style="left:2553.00px;top:978.85px;font-size:22px;line-height:30.80px;color:#6c6c6c;letter-spacing:0.260px;font-style:italic;">Search</div>
<svg class="a" style="left:2545px;top:1032px;" width="32" height="32" viewBox="0 0 28 28"><path d="M3 8 L10 2 L16 9 L10 15 Z" fill="none" stroke="#e8e8e8" stroke-width="2"/><path d="M10 15 V20 M14 11 L25 23 M25 16 V23 H18" fill="none" stroke="#e8e8e8" stroke-width="2"/></svg>
<div class="a t" style="left:2590.80px;top:1030.35px;font-size:22px;line-height:30.80px;color:#b4b4b4;letter-spacing:0.755px;">Redshift Light [RS Spot Light]</div>
<div class="a " style="left:3290px;top:1030px;width:150px;height:34px;background:#3b3b3b;border-radius:17px;"></div>
<div class="a " style="left:3400px;top:1030px;width:2px;height:34px;background:#2b2b2b;"></div>
<div class="a t" style="left:3304.50px;top:1030.85px;font-size:22px;line-height:30.80px;color:#c4c4c4;letter-spacing:0.741px;">Custom</div>
<svg class="a" style="left:3412px;top:1043px;" width="16" height="8" viewBox="0 0 16 9"><path d="M0 0 H16 L8 9 Z" fill="#b4b4b4"/></svg>
<div class="a " style="left:2542.2px;top:1076px;width:93.8px;height:36px;background:#3b3b3b;border-radius:8px;"></div>
<div class="a t" style="left:2560.40px;top:1078.35px;font-size:22px;line-height:30.80px;color:#c4c4c4;letter-spacing:0.401px;">Basic</div>
<div class="a " style="left:2644px;top:1076px;width:164px;height:36px;background:#3b3b3b;border-radius:8px;"></div>
<div class="a t" style="left:2662.30px;top:1078.35px;font-size:22px;line-height:30.80px;color:#c4c4c4;letter-spacing:0.708px;">Coordinates</div>
<div class="a " style="left:2816px;top:1076px;width:105.5px;height:36px;background:#3b3b3b;border-radius:8px;"></div>
<div class="a t" style="left:2834.60px;top:1078.35px;font-size:22px;line-height:30.80px;color:#c4c4c4;letter-spacing:1.024px;">Object</div>
<div class="a " style="left:2930.4px;top:1076px;width:109.2px;height:36px;background:#555a9c;border-radius:8px;"></div>
<div class="a t" style="left:2948.60px;top:1078.35px;font-size:22px;line-height:30.80px;color:#ffffff;letter-spacing:0.593px;">Details</div>
<div class="a " style="left:3048.5px;top:1076px;width:111.2px;height:36px;background:#3b3b3b;border-radius:8px;"></div>
<div class="a t" style="left:3066.70px;top:1078.35px;font-size:22px;line-height:30.80px;color:#c4c4c4;letter-spacing:0.722px;">Project</div>
<div class="a t" style="left:2543.00px;top:1123.29px;font-size:25px;line-height:35.00px;color:#f0f0f0;letter-spacing:-0.069px;">Details</div>
<div class="a " style="left:2538px;top:1166.5px;width:874px;height:2px;background:#1f1f1f;"></div>
<div class="a " style="left:3425px;top:1121px;width:7px;height:342px;background:#484848;border-radius:4px;"></div>
<svg class="a" style="left:2558px;top:1185px;" width="17" height="11" viewBox="0 0 18 12"><path d="M1.500 1.500 L9 9.500 L16.500 1.500" fill="none" stroke="#d0d0d0" stroke-width="2.4"/></svg>
<div class="a t" style="left:2586.70px;top:1175.54px;font-size:21px;line-height:29.40px;color:#d4d4d4;letter-spacing:-0.332px;font-weight:700;-webkit-text-stroke:0;">SHADOW</div>
<svg class="a" style="left:2556px;top:1219px;" width="32" height="32" viewBox="0 0 32 32"><circle cx="16" cy="16" r="15" fill="#282828"/><path d="M16 8 L24 16 L16 24 L8 16 Z" fill="none" stroke="#b8b8b8" stroke-width="2"/></svg>
<div class="a t" style="left:2602.90px;top:1219.85px;font-size:22px;line-height:30.80px;color:#b4b4b4;letter-spacing:0.466px;">Cast Shadow</div>
<div class="a " style="left:2850px;top:1224px;width:24px;height:24px;background:#555a9c;border-radius:5px;"></div>
<svg class="a" style="left:2850px;top:1224px;" width="24" height="24" viewBox="0 0 24 24"><path d="M5.500 12.500 L10 17 L18.500 7.500" fill="none" stroke="#fff" stroke-width="3"/></svg>
<svg class="a" style="left:2556px;top:1260px;" width="32" height="32" viewBox="0 0 32 32"><circle cx="16" cy="16" r="15" fill="#282828"/><path d="M16 8 L24 16 L16 24 L8 16 Z" fill="none" stroke="#b8b8b8" stroke-width="2"/></svg>
<div class="a t" style="left:2602.90px;top:1260.85px;font-size:22px;line-height:30.80px;color:#b4b4b4;letter-spacing:0.575px;">Transparency</div>
<div class="a " style="left:2850.4px;top:1259.5px;width:165px;height:34px;background:#1a1a1a;border-radius:7px;"></div>
<div class="a t" style="left:2904.18px;top:1261.35px;font-size:22px;line-height:30.80px;color:#e4e4e4;letter-spacing:0.600px;">0.186</div>
<div class="a " style="left:3024px;top:1272.5px;width:388px;height:8px;background:#1a1a1a;border-radius:4px;"></div>
<div class="a " style="left:3024px;top:1272.5px;width:78px;height:8px;background:#555a9c;border-radius:4px;"></div>
<div class="a " style="left:3091.5px;top:1266px;width:21px;height:21px;background:#555a9c;border-radius:11px;"></div>
<svg class="a" style="left:2556px;top:1301.5px;" width="32" height="32" viewBox="0 0 32 32"><circle cx="16" cy="16" r="15" fill="#282828"/><path d="M16 8 L24 16 L16 24 L8 16 Z" fill="none" stroke="#b8b8b8" stroke-width="2"/></svg>
<div class="a t" style="left:2602.90px;top:1302.35px;font-size:22px;line-height:30.80px;color:#b4b4b4;letter-spacing:0.771px;">Softness</div>
<div class="a " style="left:2850.4px;top:1301px;width:165px;height:34px;background:#1a1a1a;border-radius:7px;"></div>
<div class="a t" style="left:2904.18px;top:1302.85px;font-size:22px;line-height:30.80px;color:#e4e4e4;letter-spacing:0.600px;">0.612</div>
<div class="a " style="left:3024px;top:1314px;width:388px;height:8px;background:#1a1a1a;border-radius:4px;"></div>
<div class="a " style="left:3024px;top:1314px;width:122px;height:8px;background:#555a9c;border-radius:4px;"></div>
<div class="a " style="left:3135.5px;top:1307.5px;width:21px;height:21px;background:#555a9c;border-radius:11px;"></div>
<svg class="a" style="left:2556px;top:1341.5px;" width="32" height="32" viewBox="0 0 32 32"><circle cx="16" cy="16" r="15" fill="#282828"/><path d="M16 8 L24 16 L16 24 L8 16 Z" fill="none" stroke="#b8b8b8" stroke-width="2"/></svg>
<div class="a t" style="left:2602.90px;top:1342.35px;font-size:22px;line-height:30.80px;color:#b4b4b4;letter-spacing:0.861px;">Softness Affects Gobo</div>
<div class="a " style="left:2850px;top:1346px;width:24px;height:24px;background:#2b2b2b;border-radius:5px;border:3px solid #686868;"></div>
<div class="a " style="left:2538px;top:1395.5px;width:874px;height:2px;background:#1f1f1f;"></div>
<svg class="a" style="left:2558px;top:1418.5px;" width="17" height="11" viewBox="0 0 18 12"><path d="M1.500 1.500 L9 9.500 L16.500 1.500" fill="none" stroke="#d0d0d0" stroke-width="2.4"/></svg>
<div class="a t" style="left:2586.70px;top:1409.04px;font-size:21px;line-height:29.40px;color:#d4d4d4;letter-spacing:-0.383px;font-weight:700;-webkit-text-stroke:0;">LIGHT GROUP</div>
<svg class="a" style="left:2556px;top:1453.5px;" width="32" height="32" viewBox="0 0 32 32"><circle cx="16" cy="16" r="15" fill="#282828"/><path d="M16 8 L24 16 L16 24 L8 16 Z" fill="none" stroke="#b8b8b8" stroke-width="2"/></svg>
<div class="a t" style="left:2602.90px;top:1454.35px;font-size:22px;line-height:30.80px;color:#b4b4b4;letter-spacing:0.462px;">AOV Light Group</div>
<div class="a " style="left:2788px;top:1454px;width:576px;height:34px;background:#3b3b3b;border-radius:7px;"></div>
<div class="a t" style="left:2802.70px;top:1454.85px;font-size:22px;line-height:30.80px;color:#d0d0d0;letter-spacing:0.541px;">&lt; None &gt;</div>
<svg class="a" style="left:3337px;top:1467px;" width="15" height="8" viewBox="0 0 16 9"><path d="M0 0 H16 L8 9 Z" fill="#b4b4b4"/></svg>
<div class="a " style="left:3375px;top:1454px;width:34px;height:34px;background:#3b3b3b;border-radius:17px;"></div>
<svg class="a" style="left:3384.5px;top:1467.5px;" width="15" height="8" viewBox="0 0 16 9"><path d="M0 0 H16 L8 9 Z" fill="#b4b4b4"/></svg>
<div class="a " style="left:2538px;top:1508px;width:874px;height:2px;background:#1f1f1f;"></div>
<svg class="a" style="left:2558px;top:1530.5px;" width="17" height="11" viewBox="0 0 18 12"><path d="M1.500 1.500 L9 9.500 L16.500 1.500" fill="none" stroke="#d0d0d0" stroke-width="2.4"/></svg>
<div class="a t" style="left:2586.70px;top:1521.04px;font-size:21px;line-height:29.40px;color:#d4d4d4;letter-spacing:-0.090px;font-weight:700;-webkit-text-stroke:0;">CONTRIBUTION</div>
<svg class="a" style="left:2556px;top:1565.5px;" width="32" height="32" viewBox="0 0 32 32"><circle cx="16" cy="16" r="15" fill="#282828"/><path d="M16 8 L24 16 L16 24 L8 16 Z" fill="none" stroke="#b8b8b8" stroke-width="2"/></svg>
<div class="a t" style="left:2602.90px;top:1566.35px;font-size:22px;line-height:30.80px;color:#b4b4b4;letter-spacing:0.730px;">Matte Shadow Illuminator</div>
<div class="a " style="left:2880.5px;top:1570px;width:24px;height:24px;background:#2b2b2b;border-radius:5px;border:3px solid #686868;"></div>
<svg class="a" style="left:2556px;top:1605px;" width="32" height="32" viewBox="0 0 32 32"><circle cx="16" cy="16" r="15" fill="#282828"/><path d="M16 8 L24 16 L16 24 L8 16 Z" fill="none" stroke="#b8b8b8" stroke-width="2"/></svg>
<div class="a t" style="left:2602.90px;top:1605.85px;font-size:22px;line-height:30.80px;color:#b4b4b4;letter-spacing:0.927px;">Affected by Refraction</div>
<div class="a " style="left:2880.5px;top:1605px;width:531.5px;height:33px;background:#3d3d3d;border-radius:3px;"></div>
<div class="a " style="left:3057.5px;top:1605px;width:176.5px;height:33px;background:#5a5a5a;"></div>
<div class="a " style="left:3056.5px;top:1605px;width:1.5px;height:33px;background:#2b2b2b;"></div>
<div class="a " style="left:3234px;top:1605px;width:1.5px;height:33px;background:#2b2b2b;"></div>
<div class="a t" style="left:2938.50px;top:1606.35px;font-size:22px;line-height:30.80px;color:#c8c8c8;letter-spacing:0.580px;">Never</div>
<div class="a t" style="left:3121.95px;top:1606.35px;font-size:22px;line-height:30.80px;color:#f4f4f4;letter-spacing:0.748px;">Auto</div>
<div class="a t" style="left:3287.00px;top:1606.35px;font-size:22px;line-height:30.80px;color:#c8c8c8;letter-spacing:0.463px;">Always</div>
<svg class="a" style="left:2556px;top:1645.5px;" width="32" height="32" viewBox="0 0 32 32"><circle cx="16" cy="16" r="15" fill="#282828"/><path d="M16 8 L24 16 L16 24 L8 16 Z" fill="none" stroke="#b8b8b8" stroke-width="2"/></svg>
<div class="a t" style="left:2602.90px;top:1646.35px;font-size:22px;line-height:30.80px;color:#b4b4b4;letter-spacing:0.539px;">GI Max Trace Depth</div>
<div class="a " style="left:2880.5px;top:1646px;width:165px;height:34px;background:#1a1a1a;border-radius:7px;"></div>
<div class="a t" style="left:2944.05px;top:1647.85px;font-size:22px;line-height:30.80px;color:#e4e4e4;letter-spacing:0.600px;">255</div>
<div class="a " style="left:3054.5px;top:1659px;width:357.5px;height:8px;background:#1a1a1a;border-radius:4px;"></div>
<div class="a " style="left:3054.5px;top:1659px;width:347.5px;height:8px;background:#555a9c;border-radius:4px;"></div>
<div class="a " style="left:3391.5px;top:1652.5px;width:21px;height:21px;background:#555a9c;border-radius:11px;"></div>
<div class="a " style="left:2555px;top:1688px;width:857px;height:2px;background:#242424;"></div>
<svg class="a" style="left:2556px;top:1702px;" width="32" height="32" viewBox="0 0 32 32"><circle cx="16" cy="16" r="15" fill="#282828"/><path d="M16 8 L24 16 L16 24 L8 16 Z" fill="none" stroke="#b8b8b8" stroke-width="2"/></svg>
<div class="a t" style="left:2602.90px;top:1702.85px;font-size:22px;line-height:30.80px;color:#b4b4b4;letter-spacing:0.988px;">Diffuse</div>
<div class="a " style="left:2880.5px;top:1702px;width:165px;height:34px;background:#1a1a1a;border-radius:7px;"></div>
<div class="a t" style="left:2956.88px;top:1703.85px;font-size:22px;line-height:30.80px;color:#e4e4e4;letter-spacing:0.600px;">1</div>
<div class="a " style="left:3054.5px;top:1715px;width:357.5px;height:8px;background:#1a1a1a;border-radius:4px;"></div>
<div class="a " style="left:3054.5px;top:1715px;width:347.5px;height:8px;background:#555a9c;border-radius:4px;"></div>
<div class="a " style="left:3391.5px;top:1708.5px;width:21px;height:21px;background:#555a9c;border-radius:11px;"></div>
<svg class="a" style="left:2556px;top:1743.5px;" width="32" height="32" viewBox="0 0 32 32"><circle cx="16" cy="16" r="15" fill="#282828"/><path d="M16 8 L24 16 L16 24 L8 16 Z" fill="none" stroke="#b8b8b8" stroke-width="2"/></svg>
<div class="a t" style="left:2602.90px;top:1744.35px;font-size:22px;line-height:30.80px;color:#b4b4b4;letter-spacing:0.797px;">Reflection</div>
<div class="a " style="left:2880.5px;top:1743.5px;width:165px;height:34px;background:#1a1a1a;border-radius:7px;"></div>
<div class="a t" style="left:2956.88px;top:1745.35px;font-size:22px;line-height:30.80px;color:#e4e4e4;letter-spacing:0.600px;">1</div>
<div class="a " style="left:3054.5px;top:1756.5px;width:357.5px;height:8px;background:#1a1a1a;border-radius:4px;"></div>
<div class="a " style="left:3054.5px;top:1756.5px;width:347.5px;height:8px;background:#555a9c;border-radius:4px;"></div>
<div class="a " style="left:3391.5px;top:1750px;width:21px;height:21px;background:#555a9c;border-radius:11px;"></div>
<svg class="a" style="left:2556px;top:1784px;" width="32" height="32" viewBox="0 0 32 32"><circle cx="16" cy="16" r="15" fill="#282828"/><path d="M16 8 L24 16 L16 24 L8 16 Z" fill="none" stroke="#b8b8b8" stroke-width="2"/></svg>
<div class="a t" style="left:2602.90px;top:1784.85px;font-size:22px;line-height:30.80px;color:#b4b4b4;letter-spacing:0.592px;">Transmission</div>
<div class="a " style="left:2880.5px;top:1784.5px;width:165px;height:34px;background:#1a1a1a;border-radius:7px;"></div>
<div class="a t" style="left:2956.88px;top:1786.35px;font-size:22px;line-height:30.80px;color:#e4e4e4;letter-spacing:0.600px;">1</div>
<div class="a " style="left:3054.5px;top:1797.5px;width:357.5px;height:8px;background:#1a1a1a;border-radius:4px;"></div>
<div class="a " style="left:3054.5px;top:1797.5px;width:347.5px;height:8px;background:#555a9c;border-radius:4px;"></div>
<div class="a " style="left:3391.5px;top:1791px;width:21px;height:21px;background:#555a9c;border-radius:11px;"></div>
<div class="a " style="left:2526px;top:1804px;width:930px;height:4px;background:#2b2b2b;"></div>
<div class="a " style="left:2526px;top:1807px;width:930px;height:8px;background:#1c1c1c;"></div>
<div class="a " style="left:2526px;top:1815px;width:930px;height:181px;background:#2b2b2b;"></div>
<svg class="a" style="left:2538px;top:1827px;" width="28" height="22" viewBox="0 0 28 22"><path d="M0 3 H28 M0 11 H28 M0 19 H28" fill="none" stroke="#b4b4b4" stroke-width="3.6" stroke-linecap="butt" stroke-linejoin="miter" /></svg>
<div class="a " style="left:2868px;top:1819px;width:221.5px;height:39px;background:#353535;border-radius:20px;"></div>
<div class="a t" style="left:2892.00px;top:1823.35px;font-size:22px;line-height:30.80px;color:#e0e0e0;letter-spacing:0.643px;">Reset Transform</div>
<div class="a " style="left:3099.7px;top:1822px;width:200px;height:34px;background:#3b3b3b;border-radius:7px;"></div>
<div class="a t" style="left:3114.80px;top:1823.35px;font-size:22px;line-height:30.80px;color:#c4c4c4;letter-spacing:0.532px;">Object (Rel)</div>
<svg class="a" style="left:3272.5px;top:1838px;" width="15" height="8" viewBox="0 0 16 9"><path d="M0 0 H16 L8 9 Z" fill="#b4b4b4"/></svg>
<div class="a " style="left:3309.8px;top:1822px;width:132px;height:34px;background:#3b3b3b;border-radius:7px;"></div>
<div class="a t" style="left:3324.20px;top:1823.35px;font-size:22px;line-height:30.80px;color:#c4c4c4;letter-spacing:-0.066px;">Size</div>
<svg class="a" style="left:3415px;top:1838px;" width="15" height="8" viewBox="0 0 16 9"><path d="M0 0 H16 L8 9 Z" fill="#b4b4b4"/></svg>
<div class="a " style="left:2526px;top:1861px;width:930px;height:2px;background:#222;"></div>
<div class="a t" style="left:2538.50px;top:1873.35px;font-size:22px;line-height:30.80px;color:#9c9c9c;letter-spacing:0.000px;">X</div>
<div class="a " style="left:2566px;top:1871.5px;width:284px;height:34px;background:#1a1a1a;border-radius:7px;"></div>
<div class="a t" style="left:2683.26px;top:1873.35px;font-size:22px;line-height:30.80px;color:#e4e4e4;letter-spacing:0.600px;">0 cm</div>
<div class="a " style="left:2862px;top:1871.5px;width:284px;height:34px;background:#1a1a1a;border-radius:7px;"></div>
<div class="a t" style="left:2989.83px;top:1873.35px;font-size:22px;line-height:30.80px;color:#e4e4e4;letter-spacing:0.600px;">0 °</div>
<div class="a " style="left:3158.3px;top:1871.5px;width:281.5px;height:34px;background:#1a1a1a;border-radius:7px;"></div>
<div class="a t" style="left:3274.31px;top:1873.35px;font-size:22px;line-height:30.80px;color:#e4e4e4;letter-spacing:0.600px;">0 cm</div>
<div class="a t" style="left:2538.50px;top:1915.35px;font-size:22px;line-height:30.80px;color:#9c9c9c;letter-spacing:0.000px;">Y</div>
<div class="a " style="left:2566px;top:1913.5px;width:284px;height:34px;background:#1a1a1a;border-radius:7px;"></div>
<div class="a t" style="left:2641.41px;top:1915.35px;font-size:22px;line-height:30.80px;color:#e4e4e4;letter-spacing:0.600px;">3049.534 cm</div>
<div class="a " style="left:2862px;top:1913.5px;width:284px;height:34px;background:#1a1a1a;border-radius:7px;"></div>
<div class="a t" style="left:2950.43px;top:1915.35px;font-size:22px;line-height:30.80px;color:#e4e4e4;letter-spacing:0.600px;">-92.2044 °</div>
<div class="a " style="left:3158.3px;top:1913.5px;width:281.5px;height:34px;background:#1a1a1a;border-radius:7px;"></div>
<div class="a t" style="left:3274.31px;top:1915.35px;font-size:22px;line-height:30.80px;color:#e4e4e4;letter-spacing:0.600px;">0 cm</div>
<div class="a t" style="left:2538.50px;top:1957.35px;font-size:22px;line-height:30.80px;color:#9c9c9c;letter-spacing:0.000px;">Z</div>
<div class="a " style="left:2566px;top:1955.5px;width:284px;height:34px;background:#1a1a1a;border-radius:7px;"></div>
<div class="a t" style="left:2683.26px;top:1957.35px;font-size:22px;line-height:30.80px;color:#e4e4e4;letter-spacing:0.600px;">0 cm</div>
<div class="a " style="left:2862px;top:1955.5px;width:284px;height:34px;background:#1a1a1a;border-radius:7px;"></div>
<div class="a t" style="left:2989.83px;top:1957.35px;font-size:22px;line-height:30.80px;color:#e4e4e4;letter-spacing:0.600px;">0 °</div>
<div class="a " style="left:3158.3px;top:1955.5px;width:281.5px;height:34px;background:#1a1a1a;border-radius:7px;"></div>
<div class="a t" style="left:3274.31px;top:1957.35px;font-size:22px;line-height:30.80px;color:#e4e4e4;letter-spacing:0.600px;">0 cm</div>
<div class="a " style="left:2526px;top:1996px;width:930px;height:4px;background:#222;"></div>
<div class="a " style="left:0px;top:2000px;width:3456px;height:48px;background:#1b1b1b;border-radius:0 0 20px 20px;"></div>
<svg class="a" style="left:10px;top:2013px;" width="28" height="22" viewBox="0 0 28 22"><path d="M0 3 H28 M0 11 H28 M0 19 H28" fill="none" stroke="#b4b4b4" stroke-width="3.6" stroke-linecap="butt" stroke-linejoin="miter" /></svg>
<svg class="a" style="left:57px;top:2009px;" width="32" height="30" viewBox="0 0 32 30"><path d="M26.500 10 A13 13 0 1 1 21 4" fill="none" stroke="#9a9a9a" stroke-width="2.6"/><path d="M8 14.500 L14.500 21 L29 4.500" fill="none" stroke="#9a9a9a" stroke-width="2.8"/></svg>
<div class="a t" style="left:107.00px;top:2008.85px;font-size:22px;line-height:30.80px;color:#b0b0b0;letter-spacing:0.683px;">Move: Click and drag to move elements. Hold down SHIFT to quantize movement / add to the selection in point mode, CTRL to remove.</div>
</div></body></html>
